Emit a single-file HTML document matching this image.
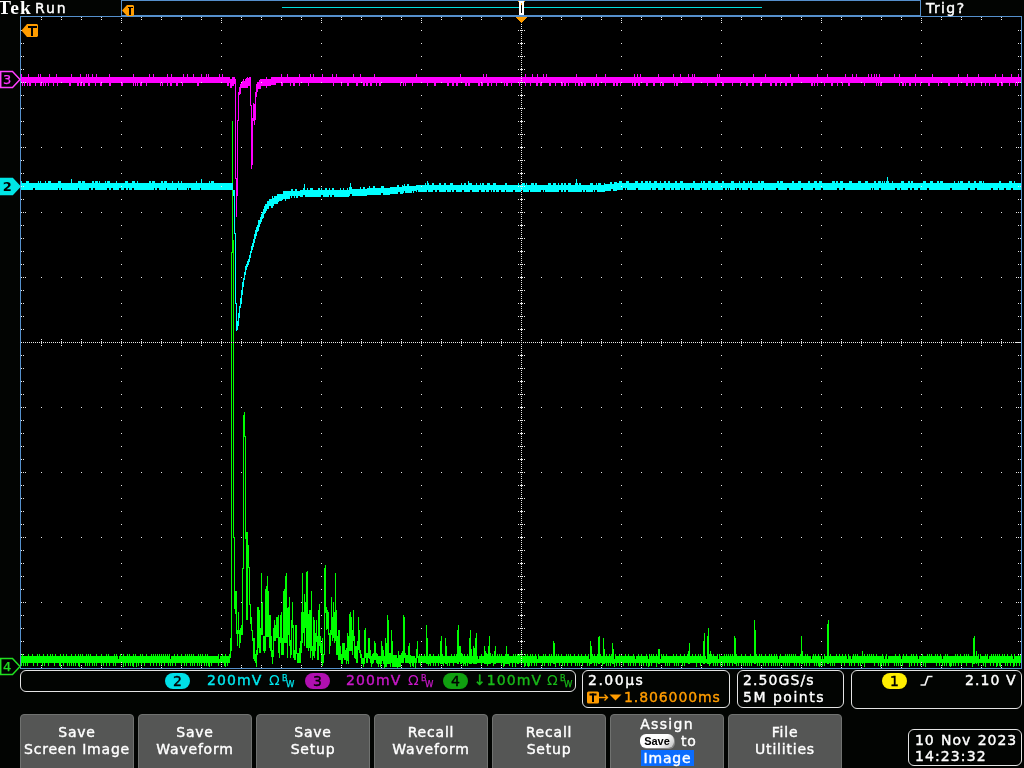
<!DOCTYPE html>
<html lang="en">
<head>
<meta charset="utf-8">
<title>Tek Run</title>
<style>
html,body{margin:0;padding:0;background:#020402;}
body{will-change:transform;width:1024px;height:768px;position:relative;overflow:hidden;color:#ffffff;
 font-family:"DejaVu Sans","Liberation Sans",sans-serif;font-size:14px;letter-spacing:1.1px;-webkit-text-stroke:0.4px currentColor;}
.abs{position:absolute;white-space:pre;line-height:16px;}
.tek{-webkit-text-stroke:0;left:-2px;top:-3px;font-family:"Liberation Serif","DejaVu Serif",serif;font-weight:bold;font-size:19.5px;letter-spacing:1.1px;line-height:22px;color:#fff;}
.box{position:absolute;border:1px solid #e4e4e4;border-radius:6px;box-sizing:border-box;background:#020402;}
.btn{position:absolute;top:714px;width:114px;height:60px;background:#555655;border:1px solid #707270;border-radius:4px;box-sizing:border-box;text-align:center;}
.btn span{letter-spacing:0.8px;position:absolute;left:0;right:0;text-align:center;white-space:pre;line-height:16px;}
.pill{position:absolute;top:673px;width:25px;height:16px;border-radius:8px;color:#000;text-align:center;line-height:16px;font-size:14px;letter-spacing:0;}
.c2{color:#00e6ee}.c3{color:#c818c8}.c4{color:#18b818}.or{color:#ff9c00}
.sm{-webkit-text-stroke:0.25px currentColor;font-size:8px;letter-spacing:0;position:absolute;line-height:8px;}
</style>
</head>
<body>
<svg width="1024" height="768" viewBox="0 0 1024 768" shape-rendering="crispEdges" style="position:absolute;left:0;top:0"><rect x="21" y="17" width="1000" height="651" fill="#000"/>
<path d="M21.5 656V666M22.5 654V663M23.5 656V666M24.5 656V663M25.5 656V666M26.5 656V663M27.5 656V666M28.5 654V663M29.5 656V663M30.5 656V663M31.5 656V663M32.5 654V663M33.5 656V666M34.5 656V663M35.5 656V663M36.5 656V663M37.5 654V666M38.5 656V663M39.5 654V663M40.5 656V663M41.5 656V663M42.5 656V666M43.5 654V663M44.5 656V666M45.5 656V663M46.5 656V663M47.5 654V663M48.5 656V666M49.5 656V663M50.5 654V663M51.5 656V663M52.5 654V663M53.5 656V663M54.5 656V666M55.5 654V663M56.5 656V663M57.5 656V663M58.5 656V663M59.5 656V666M60.5 654V667M61.5 656V663M62.5 656V663M63.5 654V666M64.5 656V663M65.5 656V663M66.5 654V663M67.5 656V666M68.5 656V663M69.5 656V666M70.5 656V663M71.5 654V666M72.5 656V663M73.5 656V666M74.5 656V663M75.5 654V666M76.5 656V663M77.5 656V663M78.5 654V666M79.5 656V667M80.5 654V663M81.5 656V663M82.5 654V663M83.5 656V663M84.5 656V663M85.5 656V666M86.5 654V663M87.5 656V666M88.5 654V663M89.5 656V666M90.5 654V663M91.5 656V663M92.5 656V666M93.5 656V663M94.5 656V666M95.5 656V663M96.5 654V666M97.5 656V663M98.5 656V663M99.5 656V663M100.5 656V663M101.5 654V666M102.5 656V663M103.5 656V666M104.5 656V663M105.5 656V663M106.5 654V666M107.5 656V663M108.5 654V663M109.5 656V666M110.5 656V663M111.5 656V663M112.5 656V663M113.5 656V666M114.5 654V663M115.5 656V666M116.5 654V663M117.5 656V663M118.5 659V663M119.5 656V663M120.5 654V663M121.5 656V663M122.5 656V663M123.5 654V667M124.5 656V663M125.5 656V666M126.5 656V663M127.5 654V663M128.5 656V666M129.5 654V663M130.5 656V666M131.5 656V663M132.5 656V666M133.5 654V667M134.5 656V663M135.5 654V663M136.5 656V667M137.5 656V663M138.5 656V666M139.5 656V663M140.5 654V663M141.5 656V666M142.5 654V663M143.5 656V663M144.5 656V666M145.5 656V663M146.5 654V663M147.5 656V663M148.5 656V663M149.5 656V663M150.5 656V666M151.5 654V663M152.5 656V663M153.5 654V666M154.5 656V663M155.5 654V663M156.5 656V666M157.5 654V663M158.5 656V663M159.5 654V666M160.5 656V663M161.5 654V666M162.5 656V663M163.5 654V663M164.5 656V666M165.5 654V663M166.5 656V663M167.5 654V663M168.5 656V666M169.5 654V663M170.5 659V666M171.5 656V663M172.5 656V666M173.5 656V663M174.5 654V663M175.5 656V666M176.5 656V663M177.5 654V663M178.5 656V663M179.5 656V663M180.5 656V663M181.5 654V666M182.5 656V663M183.5 656V663M184.5 656V666M185.5 654V663M186.5 656V666M187.5 654V663M188.5 656V663M189.5 654V663M190.5 656V666M191.5 654V663M192.5 656V666M193.5 654V663M194.5 656V666M195.5 656V663M196.5 656V663M197.5 656V666M198.5 654V663M199.5 656V666M200.5 654V663M201.5 656V666M202.5 654V663M203.5 656V663M204.5 656V666M205.5 654V663M206.5 656V666M207.5 654V663M208.5 656V666M209.5 656V667M210.5 656V663M211.5 656V666M212.5 656V663M213.5 656V663M214.5 656V663M215.5 656V663M216.5 656V663M217.5 656V663M218.5 654V666M219.5 659V663M220.5 656V663M221.5 656V663M222.5 654V663M223.5 656V663M224.5 656V666M225.5 654V667M226.5 656V663M227.5 656V666M228.5 656V663M229.5 654V663M230.5 638V658M231.5 252V651M232.5 121V253M233.5 240V538M234.5 537V609M235.5 591V614M236.5 591V634M237.5 630V646M238.5 612V634M239.5 630V648M240.5 628V643M241.5 625V635M242.5 568V635M243.5 415V569M244.5 412V437M245.5 436V539M246.5 532V620M247.5 532V620M248.5 545V568M249.5 567V605M250.5 604V624M251.5 617V631M252.5 630V641M253.5 638V659M254.5 638V661M255.5 654V663M256.5 650V667M257.5 607V655M258.5 607V648M259.5 610V653M260.5 628V653M261.5 573V635M262.5 602V635M263.5 636V651M264.5 636V653M265.5 589V651M266.5 586V637M267.5 576V637M268.5 591V637M269.5 615V648M270.5 615V651M271.5 636V657M272.5 650V664M273.5 628V657M274.5 620V641M275.5 625V641M276.5 617V638M277.5 617V638M278.5 615V653M279.5 637V658M280.5 615V643M281.5 612V655M282.5 638V655M283.5 591V655M284.5 589V643M285.5 576V643M286.5 573V643M287.5 608V658M288.5 607V635M289.5 597V646M290.5 640V658M291.5 620V655M292.5 602V628M293.5 625V658M294.5 650V660M295.5 625V660M296.5 625V654M297.5 653V663M298.5 653V663M299.5 648V663M300.5 641V663M301.5 612V653M302.5 573V643M303.5 612V633M304.5 594V646M305.5 602V628M306.5 572V648M307.5 571V648M308.5 614V651M309.5 610V648M310.5 610V658M311.5 591V651M312.5 646V660M313.5 617V656M314.5 620V658M315.5 633V651M316.5 620V642M317.5 636V660M318.5 610V660M319.5 604V646M320.5 636V653M321.5 643V663M322.5 638V666M323.5 654V663M324.5 568V655M325.5 565V613M326.5 607V630M327.5 610V629M328.5 612V635M329.5 633V654M330.5 630V646M331.5 597V635M332.5 617V641M333.5 602V638M334.5 612V643M335.5 573V641M336.5 610V655M337.5 636V655M338.5 630V660M339.5 630V660M340.5 646V660M341.5 654V664M342.5 643V664M343.5 643V658M344.5 643V660M345.5 650V660M346.5 648V664M347.5 633V661M348.5 636V664M349.5 614V651M350.5 612V651M351.5 617V651M352.5 630V655M353.5 610V641M354.5 636V658M355.5 646V659M356.5 646V663M357.5 641V663M358.5 617V650M359.5 630V653M360.5 650V658M361.5 654V664M362.5 658V664M363.5 658V667M364.5 630V664M365.5 628V658M366.5 653V663M367.5 653V663M368.5 638V658M369.5 638V659M370.5 650V663M371.5 656V667M372.5 654V664M373.5 653V663M374.5 641V660M375.5 643V660M376.5 653V663M377.5 654V664M378.5 656V667M379.5 656V664M380.5 656V667M381.5 641V664M382.5 646V661M383.5 650V664M384.5 656V668M385.5 638V667M386.5 643V667M387.5 615V664M388.5 620V664M389.5 653V664M390.5 653V667M391.5 630V663M392.5 641V667M393.5 655V667M394.5 655V667M395.5 655V667M396.5 655V667M397.5 658V668M398.5 651V667M399.5 655V667M400.5 655V667M401.5 653V663M402.5 651V663M403.5 615V663M404.5 617V658M405.5 653V663M406.5 655V663M407.5 655V663M408.5 646V663M409.5 643V664M410.5 655V667M411.5 656V663M412.5 656V666M413.5 656V667M414.5 656V663M415.5 658V668M416.5 649V663M417.5 641V658M418.5 656V663M419.5 654V663M420.5 656V666M421.5 654V663M422.5 656V663M423.5 656V663M424.5 654V663M425.5 656V663M426.5 625V664M427.5 638V664M428.5 656V666M429.5 654V664M430.5 654V666M431.5 656V663M432.5 656V663M433.5 654V666M434.5 656V663M435.5 656V666M436.5 656V663M437.5 656V663M438.5 654V666M439.5 656V663M440.5 641V664M441.5 636V664M442.5 654V664M443.5 656V666M444.5 656V663M445.5 638V664M446.5 646V664M447.5 656V666M448.5 656V663M449.5 656V666M450.5 656V663M451.5 654V663M452.5 656V663M453.5 656V666M454.5 654V663M455.5 656V663M456.5 654V663M457.5 630V664M458.5 625V664M459.5 646V662M460.5 646V664M461.5 653V664M462.5 654V663M463.5 656V666M464.5 654V664M465.5 656V666M466.5 656V663M467.5 654V666M468.5 656V663M469.5 638V664M470.5 630V664M471.5 649V664M472.5 656V663M473.5 646V664M474.5 648V664M475.5 638V664M476.5 633V664M477.5 656V663M478.5 659V663M479.5 656V663M480.5 656V663M481.5 654V666M482.5 656V663M483.5 656V663M484.5 646V664M485.5 651V664M486.5 653V664M487.5 654V666M488.5 646V664M489.5 636V664M490.5 653V664M491.5 656V663M492.5 654V663M493.5 656V666M494.5 651V664M495.5 646V664M496.5 656V663M497.5 654V663M498.5 656V663M499.5 654V663M500.5 656V663M501.5 654V666M502.5 656V663M503.5 656V667M504.5 656V666M505.5 654V664M506.5 646V664M507.5 654V664M508.5 654V664M509.5 656V666M510.5 656V663M511.5 656V663M512.5 656V667M513.5 654V663M514.5 656V663M515.5 654V667M516.5 656V663M517.5 654V664M518.5 654V664M519.5 654V663M520.5 656V663M521.5 651V665M522.5 656V663M523.5 656V663M524.5 656V667M525.5 654V666M526.5 656V663M527.5 654V666M528.5 656V667M529.5 656V666M530.5 654V663M531.5 656V666M532.5 654V663M533.5 656V663M534.5 656V666M535.5 654V663M536.5 656V666M537.5 659V663M538.5 654V663M539.5 656V663M540.5 656V663M541.5 656V663M542.5 656V666M543.5 654V663M544.5 656V666M545.5 654V663M546.5 656V663M547.5 656V663M548.5 656V666M549.5 654V663M550.5 656V666M551.5 654V663M552.5 656V663M553.5 641V664M554.5 643V664M555.5 656V667M556.5 654V663M557.5 656V663M558.5 654V663M559.5 656V666M560.5 656V663M561.5 654V663M562.5 656V666M563.5 656V663M564.5 656V666M565.5 656V663M566.5 654V663M567.5 656V666M568.5 654V663M569.5 656V663M570.5 654V663M571.5 656V666M572.5 656V663M573.5 656V663M574.5 654V663M575.5 656V666M576.5 656V663M577.5 656V666M578.5 654V663M579.5 656V666M580.5 656V663M581.5 654V663M582.5 656V666M583.5 656V663M584.5 656V663M585.5 654V663M586.5 656V663M587.5 656V666M588.5 654V663M589.5 659V666M590.5 641V664M591.5 646V664M592.5 654V663M593.5 656V663M594.5 654V666M595.5 656V663M596.5 656V666M597.5 654V663M598.5 637V664M599.5 636V664M600.5 654V663M601.5 656V663M602.5 656V666M603.5 638V664M604.5 649V664M605.5 656V663M606.5 654V666M607.5 656V663M608.5 656V666M609.5 654V663M610.5 656V666M611.5 654V663M612.5 643V664M613.5 649V664M614.5 659V667M615.5 654V663M616.5 656V666M617.5 656V663M618.5 656V663M619.5 654V666M620.5 656V663M621.5 654V663M622.5 656V663M623.5 656V666M624.5 656V663M625.5 654V663M626.5 656V663M627.5 656V663M628.5 654V666M629.5 656V663M630.5 656V666M631.5 656V663M632.5 656V663M633.5 654V666M634.5 656V663M635.5 659V666M636.5 656V663M637.5 656V663M638.5 654V663M639.5 656V666M640.5 656V663M641.5 654V666M642.5 656V663M643.5 656V666M644.5 656V663M645.5 656V663M646.5 654V666M647.5 656V663M648.5 659V667M649.5 654V666M650.5 656V663M651.5 654V666M652.5 656V663M653.5 654V663M654.5 656V663M655.5 656V663M656.5 654V667M657.5 656V663M658.5 649V664M659.5 649V664M660.5 659V663M661.5 654V663M662.5 656V663M663.5 654V663M664.5 656V663M665.5 656V666M666.5 654V663M667.5 656V666M668.5 656V663M669.5 656V666M670.5 656V663M671.5 656V663M672.5 656V663M673.5 654V663M674.5 656V666M675.5 656V663M676.5 654V666M677.5 656V663M678.5 656V666M679.5 656V663M680.5 654V663M681.5 656V663M682.5 656V666M683.5 656V663M684.5 654V666M685.5 656V663M686.5 656V663M687.5 654V663M688.5 651V664M689.5 643V664M690.5 656V663M691.5 656V663M692.5 654V663M693.5 656V663M694.5 656V663M695.5 654V663M696.5 656V667M697.5 656V663M698.5 654V663M699.5 656V663M700.5 654V666M701.5 656V663M702.5 656V663M703.5 641V664M704.5 633V664M705.5 656V663M706.5 659V663M707.5 636V664M708.5 628V664M709.5 654V666M710.5 651V664M711.5 654V663M712.5 656V663M713.5 654V666M714.5 656V663M715.5 656V666M716.5 656V663M717.5 654V666M718.5 659V663M719.5 654V663M720.5 656V666M721.5 656V663M722.5 656V666M723.5 656V663M724.5 654V666M725.5 656V663M726.5 654V663M727.5 656V666M728.5 654V663M729.5 656V666M730.5 654V663M731.5 656V663M732.5 654V666M733.5 656V663M734.5 636V664M735.5 638V664M736.5 654V666M737.5 656V663M738.5 656V666M739.5 656V663M740.5 656V663M741.5 654V666M742.5 656V663M743.5 656V666M744.5 656V663M745.5 654V666M746.5 656V663M747.5 656V666M748.5 656V663M749.5 656V666M750.5 654V663M751.5 656V666M752.5 656V663M753.5 656V663M754.5 620V664M755.5 630V664M756.5 654V663M757.5 656V666M758.5 656V663M759.5 654V666M760.5 656V663M761.5 654V663M762.5 656V663M763.5 656V666M764.5 656V663M765.5 654V666M766.5 656V663M767.5 656V663M768.5 656V666M769.5 654V663M770.5 656V663M771.5 654V666M772.5 656V663M773.5 656V666M774.5 654V663M775.5 656V666M776.5 654V663M777.5 656V666M778.5 659V663M779.5 656V666M780.5 654V663M781.5 656V663M782.5 656V663M783.5 656V666M784.5 656V663M785.5 654V666M786.5 656V663M787.5 654V666M788.5 656V663M789.5 654V666M790.5 656V663M791.5 654V663M792.5 656V663M793.5 654V663M794.5 656V666M795.5 654V663M796.5 656V666M797.5 656V663M798.5 656V663M799.5 656V666M800.5 654V663M801.5 636V664M802.5 651V664M803.5 656V663M804.5 656V666M805.5 654V663M806.5 656V666M807.5 654V663M808.5 656V663M809.5 656V666M810.5 656V663M811.5 659V663M812.5 656V663M813.5 654V663M814.5 656V666M815.5 654V663M816.5 656V666M817.5 656V663M818.5 654V666M819.5 656V667M820.5 656V666M821.5 659V663M822.5 656V666M823.5 659V663M824.5 654V666M825.5 656V663M826.5 656V663M827.5 624V664M828.5 620V664M829.5 656V663M830.5 654V666M831.5 656V663M832.5 656V666M833.5 656V663M834.5 656V666M835.5 656V663M836.5 654V663M837.5 656V663M838.5 656V663M839.5 654V663M840.5 656V663M841.5 656V666M842.5 654V663M843.5 656V663M844.5 656V666M845.5 654V663M846.5 656V663M847.5 659V663M848.5 654V663M849.5 656V666M850.5 656V663M851.5 659V666M852.5 656V663M853.5 654V663M854.5 656V666M855.5 654V663M856.5 656V663M857.5 654V663M858.5 656V666M859.5 656V663M860.5 656V666M861.5 656V663M862.5 651V664M863.5 656V663M864.5 654V667M865.5 656V663M866.5 656V663M867.5 654V663M868.5 656V663M869.5 654V663M870.5 656V663M871.5 654V663M872.5 656V663M873.5 654V663M874.5 656V666M875.5 656V663M876.5 654V663M877.5 656V663M878.5 656V666M879.5 656V663M880.5 656V667M881.5 656V666M882.5 654V663M883.5 656V666M884.5 659V663M885.5 656V666M886.5 654V663M887.5 659V663M888.5 656V666M889.5 656V663M890.5 656V663M891.5 656V663M892.5 656V663M893.5 656V663M894.5 656V666M895.5 654V663M896.5 656V666M897.5 656V663M898.5 656V666M899.5 654V663M900.5 656V666M901.5 659V663M902.5 656V666M903.5 654V663M904.5 656V663M905.5 656V663M906.5 654V663M907.5 656V663M908.5 656V663M909.5 656V667M910.5 656V663M911.5 654V666M912.5 656V663M913.5 654V663M914.5 656V666M915.5 656V663M916.5 654V663M917.5 656V666M918.5 659V663M919.5 656V663M920.5 656V666M921.5 656V663M922.5 654V663M923.5 656V666M924.5 656V663M925.5 656V667M926.5 656V663M927.5 654V663M928.5 656V663M929.5 654V663M930.5 656V663M931.5 654V663M932.5 656V663M933.5 656V663M934.5 656V663M935.5 654V663M936.5 656V666M937.5 654V663M938.5 656V663M939.5 656V666M940.5 654V663M941.5 656V663M942.5 659V666M943.5 656V663M944.5 656V666M945.5 654V663M946.5 656V666M947.5 654V663M948.5 656V663M949.5 656V666M950.5 656V667M951.5 656V666M952.5 656V663M953.5 656V666M954.5 656V663M955.5 654V666M956.5 656V663M957.5 654V663M958.5 656V666M959.5 656V663M960.5 654V663M961.5 656V666M962.5 656V663M963.5 656V663M964.5 654V663M965.5 656V663M966.5 654V666M967.5 656V663M968.5 654V663M969.5 656V663M970.5 656V663M971.5 656V663M972.5 656V667M973.5 638V664M974.5 636V664M975.5 656V663M976.5 651V664M977.5 656V663M978.5 654V666M979.5 659V663M980.5 654V663M981.5 656V663M982.5 656V663M983.5 656V666M984.5 656V663M985.5 654V667M986.5 656V663M987.5 654V663M988.5 659V663M989.5 656V663M990.5 656V666M991.5 654V663M992.5 656V663M993.5 654V666M994.5 656V663M995.5 654V663M996.5 656V667M997.5 654V666M998.5 656V663M999.5 654V666M1000.5 656V667M1001.5 656V663M1002.5 654V663M1003.5 656V663M1004.5 654V663M1005.5 656V666M1006.5 656V663M1007.5 654V666M1008.5 656V663M1009.5 656V663M1010.5 656V666M1011.5 654V663M1012.5 656V663M1013.5 659V667M1014.5 654V666M1015.5 656V663M1016.5 656V666M1017.5 656V663M1018.5 654V663M1019.5 656V666M1020.5 654V663" stroke="#00ff00" stroke-width="1" fill="none"/>
<path d="M21.5 74V83M22.5 77V86M23.5 77V83M24.5 77V86M25.5 77V83M26.5 77V83M27.5 77V86M28.5 74V83M29.5 77V86M30.5 77V86M31.5 77V83M32.5 77V83M33.5 77V83M34.5 77V83M35.5 77V86M36.5 77V83M37.5 77V83M38.5 74V83M39.5 77V83M40.5 74V86M41.5 77V86M42.5 77V83M43.5 77V86M44.5 77V83M45.5 77V86M46.5 77V83M47.5 77V83M48.5 77V86M49.5 74V83M50.5 77V83M51.5 77V83M52.5 77V83M53.5 77V86M54.5 77V83M55.5 77V83M56.5 74V83M57.5 77V86M58.5 77V83M59.5 77V83M60.5 77V83M61.5 77V83M62.5 77V83M63.5 77V83M64.5 77V83M65.5 77V83M66.5 77V83M67.5 77V83M68.5 77V83M69.5 77V86M70.5 77V86M71.5 74V83M72.5 77V83M73.5 77V83M74.5 77V83M75.5 77V83M76.5 77V83M77.5 77V86M78.5 77V86M79.5 77V83M80.5 74V86M81.5 77V86M82.5 77V83M83.5 77V86M84.5 77V86M85.5 77V83M86.5 74V83M87.5 77V83M88.5 74V86M89.5 77V86M90.5 77V83M91.5 77V83M92.5 74V83M93.5 77V83M94.5 77V83M95.5 77V86M96.5 74V83M97.5 77V83M98.5 77V83M99.5 77V83M100.5 77V86M101.5 77V86M102.5 77V83M103.5 77V83M104.5 77V83M105.5 77V83M106.5 77V83M107.5 77V83M108.5 77V83M109.5 74V86M110.5 77V86M111.5 77V83M112.5 77V83M113.5 77V83M114.5 77V83M115.5 77V83M116.5 77V83M117.5 77V83M118.5 77V83M119.5 77V83M120.5 77V83M121.5 77V86M122.5 77V86M123.5 77V83M124.5 77V83M125.5 77V83M126.5 77V83M127.5 77V83M128.5 77V83M129.5 77V83M130.5 77V83M131.5 77V83M132.5 77V83M133.5 74V86M134.5 77V83M135.5 77V86M136.5 77V83M137.5 77V86M138.5 77V83M139.5 77V83M140.5 77V86M141.5 77V86M142.5 77V83M143.5 77V83M144.5 77V83M145.5 77V83M146.5 77V86M147.5 77V83M148.5 77V83M149.5 74V83M150.5 77V83M151.5 77V83M152.5 77V83M153.5 74V83M154.5 77V83M155.5 77V83M156.5 77V83M157.5 77V83M158.5 77V83M159.5 77V83M160.5 77V86M161.5 77V83M162.5 77V86M163.5 77V83M164.5 77V83M165.5 77V83M166.5 77V83M167.5 74V86M168.5 77V83M169.5 77V83M170.5 77V86M171.5 74V86M172.5 77V83M173.5 77V83M174.5 77V83M175.5 77V83M176.5 77V86M177.5 77V86M178.5 77V83M179.5 77V83M180.5 77V83M181.5 77V83M182.5 77V86M183.5 74V83M184.5 77V83M185.5 77V83M186.5 77V83M187.5 74V83M188.5 77V83M189.5 77V83M190.5 77V83M191.5 77V83M192.5 77V83M193.5 74V83M194.5 77V83M195.5 77V83M196.5 77V83M197.5 77V86M198.5 77V86M199.5 77V83M200.5 77V83M201.5 74V83M202.5 77V83M203.5 77V83M204.5 77V83M205.5 77V83M206.5 74V83M207.5 77V83M208.5 74V83M209.5 77V83M210.5 77V83M211.5 77V83M212.5 77V83M213.5 77V83M214.5 77V83M215.5 77V83M216.5 77V83M217.5 77V83M218.5 77V83M219.5 74V83M220.5 77V83M221.5 77V83M222.5 74V83M223.5 77V83M224.5 77V83M225.5 77V83M226.5 77V83M227.5 77V86M228.5 77V86M229.5 77V83M230.5 79V88M231.5 79V88M232.5 77V86M233.5 77V86M234.5 77V84M235.5 79V179M236.5 178V217M237.5 120V196M238.5 92V121M239.5 87V95M240.5 84V94M241.5 82V88M242.5 81V88M243.5 79V88M244.5 81V88M245.5 79V88M246.5 78V88M247.5 77V88M248.5 78V86M249.5 77V86M250.5 77V106M251.5 105V169M252.5 118V165M253.5 103V121M254.5 104V125M255.5 92V120M256.5 84V97M257.5 82V92M258.5 82V89M259.5 80V89M260.5 79V89M261.5 79V86M262.5 79V86M263.5 79V86M264.5 79V86M265.5 79V86M266.5 77V88M267.5 79V86M268.5 79V86M269.5 79V86M270.5 79V86M271.5 77V85M272.5 77V85M273.5 77V85M274.5 77V85M275.5 77V85M276.5 77V83M277.5 77V83M278.5 77V83M279.5 77V83M280.5 77V83M281.5 74V86M282.5 77V86M283.5 77V83M284.5 77V83M285.5 77V83M286.5 77V83M287.5 74V83M288.5 77V83M289.5 77V83M290.5 77V86M291.5 77V83M292.5 77V83M293.5 77V86M294.5 77V86M295.5 77V83M296.5 77V83M297.5 77V83M298.5 77V83M299.5 74V86M300.5 77V83M301.5 77V83M302.5 77V83M303.5 77V83M304.5 77V83M305.5 77V83M306.5 77V83M307.5 77V83M308.5 77V86M309.5 77V83M310.5 74V83M311.5 77V83M312.5 77V83M313.5 74V83M314.5 77V83M315.5 77V83M316.5 77V83M317.5 77V83M318.5 77V83M319.5 77V83M320.5 77V83M321.5 77V83M322.5 74V83M323.5 77V83M324.5 77V83M325.5 77V83M326.5 77V83M327.5 77V83M328.5 77V83M329.5 77V83M330.5 77V83M331.5 77V83M332.5 74V83M333.5 77V86M334.5 77V83M335.5 77V83M336.5 74V83M337.5 77V83M338.5 77V83M339.5 77V83M340.5 77V83M341.5 77V86M342.5 77V83M343.5 77V83M344.5 77V83M345.5 77V83M346.5 77V83M347.5 77V86M348.5 77V86M349.5 77V83M350.5 77V83M351.5 77V83M352.5 77V83M353.5 74V83M354.5 77V83M355.5 77V83M356.5 77V86M357.5 77V86M358.5 77V83M359.5 77V83M360.5 74V83M361.5 77V83M362.5 77V83M363.5 77V86M364.5 77V86M365.5 77V83M366.5 77V86M367.5 77V86M368.5 77V83M369.5 77V83M370.5 77V86M371.5 77V86M372.5 77V83M373.5 77V83M374.5 74V83M375.5 77V83M376.5 77V86M377.5 77V83M378.5 77V83M379.5 77V86M380.5 77V86M381.5 77V83M382.5 77V83M383.5 77V83M384.5 77V83M385.5 77V83M386.5 77V83M387.5 77V83M388.5 77V83M389.5 77V83M390.5 77V83M391.5 77V83M392.5 77V83M393.5 77V83M394.5 77V83M395.5 77V83M396.5 77V83M397.5 77V83M398.5 77V83M399.5 77V83M400.5 77V86M401.5 77V83M402.5 77V83M403.5 77V86M404.5 77V83M405.5 77V86M406.5 77V83M407.5 77V83M408.5 77V83M409.5 77V83M410.5 77V83M411.5 77V83M412.5 77V86M413.5 77V83M414.5 77V83M415.5 77V83M416.5 74V83M417.5 77V83M418.5 77V83M419.5 77V83M420.5 77V83M421.5 77V83M422.5 77V83M423.5 77V83M424.5 77V83M425.5 77V83M426.5 77V83M427.5 77V86M428.5 77V83M429.5 77V83M430.5 77V83M431.5 77V83M432.5 77V83M433.5 77V83M434.5 77V86M435.5 77V86M436.5 77V83M437.5 77V83M438.5 77V83M439.5 77V83M440.5 77V83M441.5 77V83M442.5 77V83M443.5 77V83M444.5 77V83M445.5 77V83M446.5 77V83M447.5 77V86M448.5 77V86M449.5 77V83M450.5 77V83M451.5 77V83M452.5 77V86M453.5 77V86M454.5 77V83M455.5 77V83M456.5 77V86M457.5 77V86M458.5 77V83M459.5 77V83M460.5 74V83M461.5 77V83M462.5 77V83M463.5 77V83M464.5 77V83M465.5 77V86M466.5 77V86M467.5 77V83M468.5 77V86M469.5 77V86M470.5 77V83M471.5 77V83M472.5 77V83M473.5 77V83M474.5 77V83M475.5 77V83M476.5 77V83M477.5 77V83M478.5 77V86M479.5 77V86M480.5 77V83M481.5 77V86M482.5 77V86M483.5 74V83M484.5 77V83M485.5 77V83M486.5 74V83M487.5 77V86M488.5 77V86M489.5 77V83M490.5 77V83M491.5 77V86M492.5 77V83M493.5 77V83M494.5 77V83M495.5 77V83M496.5 77V86M497.5 77V83M498.5 77V83M499.5 77V83M500.5 77V83M501.5 77V83M502.5 77V83M503.5 77V83M504.5 77V86M505.5 77V83M506.5 77V86M507.5 77V86M508.5 77V83M509.5 77V83M510.5 77V83M511.5 77V86M512.5 77V83M513.5 77V83M514.5 77V83M515.5 77V83M516.5 77V83M517.5 77V83M518.5 77V83M519.5 77V86M520.5 77V83M521.5 77V83M522.5 77V83M523.5 77V83M524.5 77V83M525.5 74V86M526.5 77V83M527.5 77V83M528.5 77V83M529.5 77V83M530.5 77V86M531.5 77V83M532.5 74V83M533.5 77V83M534.5 77V83M535.5 77V83M536.5 77V86M537.5 74V86M538.5 77V83M539.5 77V83M540.5 77V86M541.5 77V86M542.5 77V83M543.5 74V83M544.5 77V83M545.5 77V83M546.5 74V83M547.5 77V83M548.5 77V83M549.5 77V86M550.5 77V86M551.5 77V83M552.5 77V83M553.5 77V83M554.5 77V83M555.5 77V86M556.5 77V83M557.5 77V83M558.5 77V83M559.5 77V83M560.5 77V83M561.5 77V86M562.5 77V86M563.5 77V83M564.5 77V86M565.5 77V86M566.5 77V83M567.5 77V83M568.5 77V86M569.5 77V83M570.5 77V83M571.5 77V83M572.5 77V83M573.5 77V83M574.5 77V83M575.5 77V86M576.5 74V83M577.5 77V83M578.5 77V86M579.5 77V86M580.5 77V83M581.5 77V86M582.5 77V86M583.5 77V83M584.5 77V86M585.5 77V86M586.5 77V83M587.5 77V83M588.5 77V83M589.5 77V83M590.5 77V83M591.5 77V86M592.5 77V83M593.5 77V86M594.5 77V86M595.5 77V83M596.5 74V83M597.5 77V86M598.5 77V86M599.5 77V83M600.5 77V83M601.5 77V83M602.5 77V83M603.5 77V83M604.5 77V83M605.5 74V86M606.5 77V83M607.5 77V83M608.5 77V83M609.5 77V83M610.5 77V83M611.5 77V83M612.5 77V83M613.5 77V86M614.5 77V86M615.5 77V83M616.5 77V86M617.5 77V86M618.5 77V83M619.5 77V83M620.5 77V86M621.5 77V83M622.5 77V83M623.5 77V83M624.5 77V83M625.5 77V83M626.5 77V83M627.5 77V83M628.5 77V83M629.5 77V83M630.5 77V83M631.5 77V83M632.5 77V86M633.5 77V83M634.5 74V86M635.5 77V86M636.5 77V83M637.5 74V83M638.5 77V86M639.5 77V86M640.5 74V83M641.5 77V83M642.5 77V83M643.5 77V83M644.5 77V83M645.5 77V83M646.5 77V86M647.5 77V86M648.5 77V83M649.5 77V83M650.5 77V83M651.5 77V83M652.5 77V83M653.5 77V86M654.5 77V86M655.5 77V83M656.5 77V83M657.5 77V83M658.5 74V83M659.5 77V83M660.5 77V86M661.5 77V83M662.5 77V86M663.5 77V86M664.5 77V83M665.5 77V83M666.5 77V83M667.5 77V83M668.5 77V83M669.5 77V83M670.5 77V83M671.5 77V83M672.5 77V83M673.5 74V83M674.5 77V86M675.5 77V83M676.5 77V86M677.5 77V86M678.5 77V83M679.5 77V83M680.5 74V83M681.5 77V83M682.5 77V83M683.5 77V83M684.5 77V83M685.5 77V83M686.5 77V83M687.5 77V83M688.5 74V83M689.5 77V83M690.5 77V83M691.5 77V83M692.5 74V86M693.5 77V86M694.5 74V83M695.5 77V83M696.5 77V83M697.5 77V83M698.5 77V83M699.5 77V83M700.5 77V83M701.5 77V83M702.5 77V83M703.5 77V83M704.5 77V83M705.5 77V83M706.5 77V83M707.5 77V86M708.5 77V83M709.5 77V83M710.5 77V83M711.5 77V83M712.5 77V83M713.5 77V83M714.5 77V83M715.5 77V86M716.5 77V86M717.5 74V83M718.5 77V83M719.5 74V83M720.5 77V83M721.5 77V83M722.5 77V86M723.5 77V86M724.5 77V83M725.5 77V83M726.5 77V83M727.5 77V83M728.5 77V83M729.5 77V83M730.5 77V83M731.5 77V83M732.5 77V86M733.5 77V83M734.5 77V83M735.5 77V83M736.5 77V83M737.5 77V83M738.5 77V83M739.5 77V83M740.5 77V86M741.5 77V83M742.5 77V83M743.5 77V83M744.5 77V83M745.5 77V83M746.5 77V86M747.5 77V86M748.5 77V83M749.5 77V83M750.5 77V83M751.5 77V83M752.5 77V86M753.5 74V86M754.5 77V83M755.5 77V83M756.5 77V83M757.5 77V83M758.5 77V83M759.5 77V83M760.5 77V86M761.5 77V86M762.5 77V83M763.5 77V83M764.5 77V83M765.5 74V83M766.5 77V83M767.5 77V83M768.5 77V83M769.5 77V83M770.5 77V86M771.5 77V86M772.5 77V83M773.5 77V83M774.5 77V83M775.5 77V86M776.5 77V86M777.5 77V83M778.5 77V83M779.5 77V83M780.5 77V86M781.5 77V83M782.5 77V83M783.5 77V83M784.5 77V83M785.5 77V86M786.5 77V86M787.5 77V83M788.5 77V83M789.5 77V83M790.5 74V83M791.5 77V86M792.5 77V86M793.5 77V83M794.5 77V83M795.5 77V83M796.5 77V83M797.5 77V83M798.5 74V83M799.5 77V83M800.5 77V83M801.5 77V83M802.5 77V83M803.5 77V83M804.5 77V83M805.5 77V83M806.5 77V83M807.5 77V83M808.5 77V83M809.5 77V83M810.5 77V83M811.5 77V86M812.5 77V86M813.5 77V83M814.5 77V86M815.5 77V83M816.5 77V83M817.5 74V86M818.5 77V83M819.5 77V83M820.5 77V83M821.5 77V83M822.5 77V83M823.5 77V83M824.5 77V86M825.5 77V83M826.5 77V83M827.5 74V83M828.5 77V83M829.5 77V83M830.5 77V83M831.5 77V86M832.5 77V86M833.5 77V83M834.5 77V83M835.5 77V83M836.5 77V83M837.5 77V86M838.5 77V83M839.5 77V83M840.5 77V83M841.5 77V83M842.5 77V86M843.5 77V83M844.5 77V83M845.5 74V83M846.5 77V83M847.5 77V83M848.5 77V86M849.5 77V86M850.5 77V83M851.5 77V83M852.5 74V83M853.5 77V83M854.5 77V83M855.5 77V83M856.5 74V83M857.5 77V83M858.5 77V83M859.5 77V83M860.5 77V83M861.5 77V83M862.5 77V83M863.5 77V83M864.5 77V86M865.5 77V83M866.5 77V83M867.5 77V83M868.5 74V83M869.5 77V83M870.5 77V83M871.5 74V83M872.5 77V83M873.5 77V83M874.5 74V83M875.5 77V83M876.5 74V86M877.5 77V83M878.5 77V86M879.5 74V83M880.5 77V86M881.5 77V86M882.5 77V83M883.5 77V83M884.5 77V83M885.5 77V83M886.5 77V83M887.5 77V83M888.5 77V83M889.5 77V83M890.5 77V83M891.5 77V83M892.5 77V83M893.5 77V83M894.5 74V83M895.5 77V83M896.5 77V83M897.5 77V83M898.5 77V83M899.5 74V86M900.5 77V83M901.5 77V83M902.5 77V86M903.5 77V86M904.5 77V83M905.5 77V86M906.5 77V83M907.5 77V83M908.5 77V83M909.5 77V86M910.5 77V86M911.5 77V83M912.5 77V83M913.5 77V83M914.5 77V83M915.5 74V86M916.5 77V83M917.5 77V83M918.5 77V83M919.5 77V83M920.5 77V86M921.5 77V83M922.5 77V83M923.5 77V83M924.5 77V83M925.5 77V83M926.5 77V83M927.5 77V83M928.5 77V86M929.5 77V86M930.5 77V83M931.5 77V83M932.5 74V83M933.5 77V83M934.5 77V83M935.5 77V83M936.5 77V83M937.5 77V83M938.5 77V86M939.5 77V83M940.5 77V83M941.5 77V83M942.5 77V83M943.5 77V83M944.5 77V83M945.5 77V83M946.5 77V83M947.5 77V83M948.5 77V86M949.5 77V86M950.5 77V83M951.5 77V83M952.5 77V83M953.5 77V83M954.5 77V83M955.5 77V83M956.5 77V83M957.5 77V86M958.5 74V83M959.5 77V83M960.5 77V83M961.5 77V83M962.5 77V83M963.5 77V83M964.5 77V83M965.5 77V83M966.5 77V86M967.5 74V86M968.5 77V83M969.5 77V83M970.5 77V83M971.5 77V86M972.5 77V83M973.5 77V83M974.5 77V86M975.5 77V83M976.5 77V83M977.5 77V83M978.5 74V83M979.5 77V83M980.5 77V83M981.5 77V86M982.5 77V83M983.5 77V83M984.5 77V83M985.5 77V86M986.5 77V83M987.5 77V83M988.5 77V83M989.5 77V86M990.5 77V83M991.5 77V83M992.5 77V83M993.5 77V83M994.5 77V83M995.5 74V83M996.5 77V83M997.5 77V86M998.5 77V86M999.5 77V83M1000.5 77V83M1001.5 77V86M1002.5 74V86M1003.5 77V83M1004.5 77V83M1005.5 77V83M1006.5 77V83M1007.5 77V83M1008.5 77V83M1009.5 77V86M1010.5 77V83M1011.5 74V83M1012.5 77V83M1013.5 77V83M1014.5 77V83M1015.5 77V86M1016.5 77V83M1017.5 77V86M1018.5 74V83M1019.5 77V83M1020.5 77V83" stroke="#ff00ff" stroke-width="1" fill="none"/>
<path d="M21.5 181V190M22.5 183V190M23.5 183V190M24.5 183V190M25.5 183V190M26.5 181V190M27.5 181V190M28.5 181V190M29.5 183V190M30.5 183V190M31.5 183V190M32.5 183V190M33.5 183V188M34.5 183V188M35.5 183V190M36.5 183V190M37.5 183V190M38.5 181V190M39.5 183V190M40.5 181V190M41.5 183V190M42.5 183V190M43.5 183V190M44.5 183V190M45.5 181V190M46.5 183V190M47.5 183V190M48.5 181V190M49.5 181V190M50.5 181V190M51.5 183V190M52.5 183V190M53.5 183V190M54.5 183V190M55.5 183V190M56.5 183V190M57.5 183V190M58.5 181V188M59.5 181V190M60.5 181V190M61.5 183V188M62.5 183V190M63.5 183V190M64.5 183V190M65.5 183V190M66.5 183V190M67.5 183V190M68.5 183V190M69.5 183V190M70.5 183V190M71.5 179V190M72.5 183V190M73.5 183V190M74.5 183V190M75.5 183V190M76.5 183V190M77.5 183V190M78.5 181V188M79.5 181V190M80.5 181V190M81.5 183V190M82.5 181V190M83.5 181V190M84.5 181V190M85.5 183V190M86.5 183V190M87.5 183V190M88.5 183V190M89.5 183V188M90.5 183V188M91.5 183V190M92.5 181V190M93.5 181V188M94.5 183V188M95.5 181V190M96.5 181V190M97.5 181V190M98.5 183V190M99.5 181V190M100.5 183V190M101.5 183V190M102.5 183V190M103.5 183V190M104.5 183V190M105.5 181V190M106.5 183V190M107.5 181V188M108.5 181V188M109.5 181V190M110.5 183V190M111.5 183V188M112.5 183V188M113.5 183V190M114.5 183V190M115.5 183V190M116.5 181V190M117.5 183V190M118.5 183V190M119.5 183V188M120.5 183V188M121.5 183V190M122.5 183V190M123.5 183V190M124.5 183V188M125.5 181V188M126.5 181V190M127.5 181V190M128.5 183V188M129.5 183V190M130.5 183V190M131.5 183V190M132.5 181V188M133.5 181V188M134.5 181V190M135.5 183V190M136.5 183V190M137.5 181V190M138.5 183V190M139.5 183V190M140.5 183V190M141.5 183V190M142.5 183V190M143.5 183V190M144.5 183V190M145.5 183V190M146.5 183V190M147.5 183V190M148.5 183V190M149.5 181V190M150.5 181V190M151.5 183V190M152.5 181V190M153.5 181V190M154.5 181V188M155.5 183V190M156.5 183V190M157.5 183V188M158.5 183V188M159.5 183V190M160.5 183V190M161.5 181V190M162.5 181V190M163.5 183V190M164.5 181V190M165.5 181V190M166.5 181V188M167.5 183V190M168.5 183V190M169.5 183V190M170.5 183V190M171.5 183V190M172.5 181V190M173.5 183V190M174.5 183V190M175.5 183V190M176.5 183V190M177.5 183V188M178.5 181V190M179.5 183V190M180.5 183V190M181.5 181V190M182.5 183V190M183.5 183V190M184.5 183V190M185.5 183V190M186.5 183V190M187.5 183V188M188.5 183V190M189.5 183V188M190.5 183V188M191.5 183V190M192.5 183V190M193.5 183V190M194.5 183V190M195.5 183V190M196.5 181V190M197.5 183V190M198.5 183V190M199.5 183V190M200.5 183V188M201.5 179V190M202.5 183V190M203.5 183V190M204.5 183V190M205.5 183V190M206.5 183V190M207.5 183V190M208.5 183V190M209.5 181V190M210.5 183V190M211.5 181V190M212.5 181V190M213.5 181V190M214.5 183V190M215.5 183V190M216.5 183V190M217.5 183V190M218.5 183V190M219.5 183V190M220.5 183V190M221.5 183V190M222.5 183V190M223.5 183V190M224.5 183V190M225.5 183V190M226.5 183V190M227.5 183V190M228.5 183V190M229.5 183V190M230.5 183V190M231.5 183V190M232.5 183V190M233.5 190V196M234.5 190V234M235.5 233V304M236.5 303V331M237.5 321V330M238.5 313V326M239.5 306V318M240.5 298V308M241.5 290V304M242.5 282V295M243.5 278V287M244.5 272V280M245.5 266V275M246.5 264V270M247.5 261V267M248.5 259V265M249.5 255V262M250.5 251V258M251.5 246V253M252.5 243V250M253.5 239V247M254.5 234V243M255.5 230V239M256.5 227V236M257.5 225V232M258.5 220V231M259.5 220V227M260.5 217V224M261.5 214V222M262.5 212V219M263.5 209V218M264.5 206V214M265.5 204V213M266.5 204V211M267.5 201V209M268.5 201V209M269.5 199V206M270.5 199V206M271.5 199V208M272.5 196V208M273.5 198V206M274.5 196V204M275.5 196V204M276.5 196V204M277.5 194V204M278.5 194V202M279.5 194V201M280.5 194V201M281.5 194V201M282.5 194V200M283.5 191V199M284.5 191V199M285.5 191V201M286.5 191V199M287.5 191V199M288.5 191V199M289.5 191V199M290.5 191V196M291.5 189V198M292.5 189V196M293.5 191V196M294.5 191V198M295.5 189V196M296.5 189V198M297.5 191V198M298.5 191V196M299.5 191V196M300.5 190V197M301.5 190V197M302.5 190V197M303.5 188V195M304.5 184V195M305.5 190V197M306.5 190V197M307.5 188V197M308.5 190V197M309.5 190V197M310.5 188V197M311.5 188V197M312.5 188V197M313.5 190V197M314.5 190V197M315.5 190V197M316.5 190V197M317.5 190V197M318.5 188V197M319.5 188V197M320.5 190V197M321.5 188V195M322.5 190V195M323.5 190V197M324.5 190V197M325.5 188V197M326.5 188V197M327.5 190V197M328.5 190V197M329.5 188V195M330.5 190V197M331.5 190V197M332.5 188V195M333.5 188V195M334.5 190V197M335.5 190V197M336.5 190V197M337.5 190V197M338.5 190V197M339.5 190V197M340.5 188V197M341.5 190V197M342.5 190V197M343.5 188V197M344.5 190V197M345.5 190V197M346.5 190V197M347.5 188V197M348.5 190V197M349.5 187V196M350.5 183V194M351.5 187V194M352.5 189V196M353.5 189V196M354.5 189V196M355.5 189V196M356.5 189V196M357.5 189V196M358.5 189V196M359.5 189V196M360.5 187V196M361.5 189V196M362.5 189V196M363.5 187V196M364.5 187V196M365.5 189V196M366.5 189V196M367.5 188V195M368.5 188V195M369.5 186V195M370.5 188V195M371.5 188V195M372.5 188V195M373.5 186V195M374.5 186V195M375.5 188V195M376.5 188V195M377.5 188V195M378.5 188V195M379.5 188V195M380.5 188V195M381.5 186V193M382.5 186V193M383.5 186V195M384.5 188V195M385.5 188V195M386.5 188V195M387.5 188V195M388.5 188V195M389.5 188V195M390.5 187V194M391.5 187V194M392.5 187V194M393.5 187V194M394.5 187V194M395.5 187V194M396.5 187V194M397.5 185V194M398.5 185V192M399.5 187V192M400.5 187V194M401.5 187V194M402.5 185V194M403.5 186V193M404.5 184V191M405.5 186V193M406.5 186V193M407.5 184V193M408.5 184V193M409.5 186V193M410.5 186V193M411.5 186V193M412.5 186V191M413.5 186V193M414.5 186V191M415.5 186V191M416.5 185V192M417.5 185V190M418.5 185V192M419.5 185V192M420.5 185V192M421.5 185V192M422.5 185V192M423.5 185V192M424.5 185V192M425.5 183V192M426.5 185V192M427.5 181V190M428.5 183V192M429.5 185V192M430.5 185V192M431.5 185V192M432.5 183V192M433.5 183V190M434.5 185V190M435.5 185V192M436.5 185V192M437.5 185V190M438.5 185V190M439.5 183V192M440.5 183V192M441.5 185V192M442.5 185V192M443.5 185V192M444.5 183V192M445.5 183V192M446.5 185V190M447.5 185V192M448.5 185V192M449.5 185V192M450.5 183V192M451.5 183V190M452.5 183V192M453.5 185V192M454.5 185V190M455.5 185V190M456.5 185V192M457.5 185V192M458.5 185V192M459.5 185V192M460.5 185V192M461.5 183V192M462.5 185V190M463.5 185V190M464.5 183V192M465.5 183V192M466.5 185V192M467.5 185V192M468.5 181V192M469.5 183V192M470.5 183V190M471.5 183V190M472.5 185V192M473.5 185V192M474.5 185V192M475.5 185V192M476.5 183V192M477.5 185V192M478.5 185V192M479.5 185V190M480.5 183V190M481.5 185V192M482.5 183V192M483.5 183V192M484.5 185V192M485.5 185V190M486.5 185V192M487.5 183V192M488.5 183V192M489.5 183V190M490.5 185V190M491.5 185V192M492.5 185V190M493.5 183V192M494.5 183V192M495.5 183V190M496.5 185V192M497.5 185V192M498.5 185V192M499.5 185V190M500.5 185V190M501.5 185V192M502.5 185V192M503.5 185V192M504.5 185V192M505.5 183V190M506.5 183V192M507.5 185V192M508.5 185V192M509.5 185V192M510.5 185V192M511.5 185V192M512.5 185V192M513.5 185V190M514.5 185V190M515.5 185V192M516.5 185V192M517.5 185V192M518.5 183V192M519.5 185V192M520.5 185V192M521.5 185V190M522.5 183V190M523.5 183V192M524.5 183V192M525.5 185V192M526.5 183V192M527.5 185V192M528.5 185V192M529.5 185V190M530.5 185V192M531.5 183V192M532.5 183V192M533.5 183V192M534.5 185V192M535.5 183V192M536.5 183V192M537.5 185V192M538.5 185V192M539.5 185V192M540.5 185V192M541.5 185V190M542.5 185V190M543.5 185V192M544.5 185V190M545.5 185V192M546.5 185V192M547.5 185V192M548.5 183V192M549.5 183V192M550.5 183V192M551.5 185V192M552.5 185V192M553.5 183V192M554.5 183V192M555.5 183V192M556.5 185V192M557.5 185V192M558.5 183V192M559.5 185V190M560.5 185V190M561.5 183V192M562.5 183V192M563.5 185V190M564.5 183V192M565.5 183V192M566.5 185V190M567.5 185V190M568.5 183V192M569.5 183V192M570.5 183V192M571.5 185V192M572.5 185V192M573.5 185V192M574.5 185V192M575.5 183V192M576.5 179V192M577.5 183V192M578.5 185V192M579.5 183V192M580.5 183V192M581.5 185V192M582.5 185V190M583.5 185V192M584.5 185V192M585.5 185V190M586.5 185V192M587.5 185V192M588.5 185V192M589.5 185V192M590.5 183V192M591.5 183V192M592.5 183V192M593.5 185V190M594.5 185V192M595.5 185V190M596.5 183V190M597.5 185V192M598.5 183V192M599.5 183V192M600.5 183V192M601.5 185V192M602.5 185V192M603.5 185V192M604.5 183V192M605.5 184V191M606.5 184V191M607.5 184V191M608.5 184V191M609.5 184V191M610.5 182V191M611.5 182V189M612.5 184V189M613.5 184V191M614.5 182V191M615.5 182V191M616.5 182V191M617.5 183V190M618.5 183V190M619.5 181V190M620.5 181V190M621.5 181V190M622.5 183V190M623.5 183V188M624.5 183V188M625.5 183V190M626.5 181V188M627.5 181V190M628.5 181V190M629.5 183V190M630.5 183V190M631.5 183V190M632.5 183V190M633.5 183V190M634.5 183V190M635.5 181V190M636.5 181V188M637.5 181V188M638.5 183V190M639.5 183V190M640.5 183V190M641.5 181V190M642.5 181V190M643.5 183V190M644.5 183V190M645.5 181V190M646.5 181V190M647.5 181V190M648.5 183V190M649.5 181V190M650.5 181V190M651.5 183V188M652.5 183V190M653.5 183V190M654.5 181V190M655.5 181V190M656.5 181V188M657.5 183V188M658.5 183V190M659.5 183V190M660.5 181V190M661.5 183V190M662.5 183V190M663.5 183V188M664.5 181V188M665.5 181V190M666.5 183V190M667.5 183V190M668.5 181V190M669.5 181V190M670.5 183V188M671.5 183V190M672.5 183V190M673.5 183V190M674.5 183V188M675.5 181V190M676.5 181V190M677.5 183V190M678.5 183V190M679.5 183V190M680.5 181V188M681.5 181V190M682.5 181V190M683.5 183V190M684.5 183V188M685.5 183V190M686.5 183V190M687.5 183V190M688.5 183V190M689.5 183V190M690.5 183V188M691.5 183V190M692.5 183V188M693.5 181V188M694.5 181V190M695.5 183V190M696.5 183V190M697.5 183V190M698.5 183V190M699.5 183V190M700.5 183V188M701.5 181V188M702.5 183V190M703.5 181V190M704.5 181V190M705.5 183V190M706.5 183V190M707.5 183V188M708.5 181V190M709.5 181V190M710.5 181V190M711.5 183V190M712.5 183V188M713.5 183V190M714.5 183V190M715.5 181V190M716.5 181V190M717.5 181V190M718.5 183V190M719.5 183V190M720.5 183V190M721.5 183V190M722.5 181V190M723.5 181V188M724.5 183V188M725.5 183V190M726.5 183V190M727.5 183V188M728.5 183V190M729.5 183V188M730.5 183V190M731.5 181V190M732.5 181V190M733.5 181V190M734.5 183V190M735.5 183V188M736.5 183V190M737.5 183V188M738.5 183V188M739.5 181V190M740.5 183V190M741.5 183V188M742.5 183V190M743.5 181V190M744.5 181V190M745.5 183V190M746.5 183V190M747.5 183V190M748.5 181V188M749.5 183V188M750.5 181V190M751.5 181V190M752.5 183V188M753.5 183V190M754.5 183V190M755.5 183V190M756.5 183V190M757.5 183V190M758.5 181V190M759.5 181V190M760.5 183V190M761.5 181V190M762.5 181V190M763.5 181V188M764.5 183V190M765.5 183V190M766.5 183V190M767.5 183V190M768.5 183V190M769.5 183V190M770.5 183V190M771.5 183V190M772.5 183V190M773.5 183V190M774.5 183V190M775.5 183V190M776.5 183V188M777.5 181V188M778.5 181V190M779.5 183V190M780.5 181V190M781.5 181V190M782.5 181V190M783.5 183V190M784.5 183V190M785.5 183V190M786.5 183V190M787.5 183V188M788.5 183V188M789.5 183V190M790.5 183V190M791.5 183V190M792.5 181V190M793.5 181V190M794.5 183V190M795.5 183V190M796.5 183V190M797.5 183V190M798.5 181V190M799.5 181V190M800.5 181V190M801.5 183V188M802.5 183V188M803.5 183V190M804.5 183V190M805.5 183V190M806.5 183V190M807.5 183V190M808.5 181V190M809.5 181V190M810.5 183V190M811.5 183V190M812.5 183V190M813.5 183V188M814.5 181V188M815.5 181V190M816.5 181V190M817.5 183V190M818.5 183V190M819.5 181V190M820.5 181V190M821.5 181V188M822.5 183V188M823.5 183V190M824.5 183V190M825.5 183V190M826.5 183V190M827.5 183V190M828.5 183V190M829.5 183V190M830.5 183V190M831.5 183V190M832.5 181V190M833.5 181V190M834.5 181V190M835.5 183V190M836.5 181V190M837.5 181V188M838.5 183V188M839.5 183V190M840.5 181V190M841.5 181V190M842.5 181V190M843.5 183V188M844.5 183V188M845.5 183V190M846.5 183V190M847.5 183V190M848.5 183V190M849.5 181V190M850.5 181V190M851.5 181V190M852.5 183V190M853.5 183V190M854.5 183V190M855.5 183V190M856.5 183V190M857.5 183V190M858.5 181V190M859.5 181V190M860.5 181V190M861.5 183V190M862.5 183V190M863.5 183V190M864.5 183V190M865.5 181V190M866.5 181V190M867.5 181V190M868.5 183V190M869.5 183V190M870.5 183V190M871.5 183V188M872.5 183V190M873.5 183V188M874.5 181V190M875.5 181V190M876.5 183V190M877.5 183V190M878.5 181V190M879.5 181V188M880.5 181V188M881.5 183V190M882.5 181V190M883.5 183V190M884.5 181V190M885.5 183V190M886.5 181V190M887.5 177V190M888.5 181V190M889.5 183V190M890.5 183V190M891.5 183V190M892.5 181V190M893.5 183V190M894.5 183V190M895.5 183V188M896.5 183V188M897.5 183V190M898.5 183V190M899.5 183V190M900.5 183V188M901.5 181V190M902.5 181V190M903.5 181V190M904.5 183V190M905.5 183V190M906.5 183V190M907.5 183V190M908.5 181V188M909.5 181V188M910.5 183V190M911.5 181V190M912.5 181V188M913.5 183V188M914.5 183V190M915.5 183V190M916.5 183V190M917.5 183V190M918.5 183V188M919.5 183V188M920.5 183V190M921.5 183V190M922.5 183V190M923.5 181V190M924.5 181V190M925.5 181V190M926.5 183V190M927.5 183V188M928.5 183V188M929.5 183V190M930.5 181V190M931.5 181V190M932.5 181V190M933.5 183V190M934.5 183V190M935.5 183V190M936.5 183V190M937.5 181V190M938.5 181V190M939.5 183V190M940.5 181V190M941.5 181V190M942.5 181V190M943.5 183V190M944.5 183V190M945.5 183V190M946.5 183V190M947.5 183V190M948.5 183V190M949.5 183V190M950.5 183V188M951.5 183V188M952.5 183V190M953.5 183V190M954.5 181V190M955.5 183V190M956.5 183V190M957.5 183V190M958.5 181V190M959.5 183V190M960.5 181V190M961.5 181V190M962.5 181V190M963.5 183V190M964.5 183V190M965.5 183V190M966.5 183V190M967.5 183V190M968.5 181V188M969.5 181V188M970.5 183V190M971.5 183V190M972.5 183V190M973.5 183V190M974.5 181V190M975.5 181V188M976.5 183V188M977.5 183V190M978.5 183V190M979.5 181V190M980.5 181V190M981.5 181V190M982.5 183V190M983.5 181V190M984.5 183V190M985.5 183V190M986.5 183V190M987.5 183V190M988.5 183V190M989.5 183V190M990.5 183V190M991.5 183V188M992.5 183V188M993.5 183V190M994.5 183V190M995.5 183V190M996.5 183V190M997.5 183V190M998.5 183V188M999.5 181V190M1000.5 181V190M1001.5 183V190M1002.5 183V190M1003.5 183V190M1004.5 183V188M1005.5 183V188M1006.5 183V190M1007.5 183V190M1008.5 183V190M1009.5 181V190M1010.5 181V190M1011.5 181V188M1012.5 183V188M1013.5 183V190M1014.5 181V190M1015.5 183V190M1016.5 183V190M1017.5 183V190M1018.5 183V190M1019.5 183V190M1020.5 183V190" stroke="#00ffff" stroke-width="1" fill="none"/>
<g fill="#e8e8e8"><line x1="121.5" y1="30" x2="121.5" y2="655" stroke="#e8e8e8" stroke-width="1" stroke-dasharray="1 12"/><line x1="221.5" y1="30" x2="221.5" y2="655" stroke="#e8e8e8" stroke-width="1" stroke-dasharray="1 12"/><line x1="321.5" y1="30" x2="321.5" y2="655" stroke="#e8e8e8" stroke-width="1" stroke-dasharray="1 12"/><line x1="421.5" y1="30" x2="421.5" y2="655" stroke="#e8e8e8" stroke-width="1" stroke-dasharray="1 12"/><line x1="621.5" y1="30" x2="621.5" y2="655" stroke="#e8e8e8" stroke-width="1" stroke-dasharray="1 12"/><line x1="721.5" y1="30" x2="721.5" y2="655" stroke="#e8e8e8" stroke-width="1" stroke-dasharray="1 12"/><line x1="821.5" y1="30" x2="821.5" y2="655" stroke="#e8e8e8" stroke-width="1" stroke-dasharray="1 12"/><line x1="921.5" y1="30" x2="921.5" y2="655" stroke="#e8e8e8" stroke-width="1" stroke-dasharray="1 12"/><line x1="21" y1="82.5" x2="1021" y2="82.5" stroke="#e8e8e8" stroke-width="1" stroke-dasharray="1 19"/><line x1="21" y1="147.5" x2="1021" y2="147.5" stroke="#e8e8e8" stroke-width="1" stroke-dasharray="1 19"/><line x1="21" y1="212.5" x2="1021" y2="212.5" stroke="#e8e8e8" stroke-width="1" stroke-dasharray="1 19"/><line x1="21" y1="277.5" x2="1021" y2="277.5" stroke="#e8e8e8" stroke-width="1" stroke-dasharray="1 19"/><line x1="21" y1="407.5" x2="1021" y2="407.5" stroke="#e8e8e8" stroke-width="1" stroke-dasharray="1 19"/><line x1="21" y1="472.5" x2="1021" y2="472.5" stroke="#e8e8e8" stroke-width="1" stroke-dasharray="1 19"/><line x1="21" y1="537.5" x2="1021" y2="537.5" stroke="#e8e8e8" stroke-width="1" stroke-dasharray="1 19"/><line x1="21" y1="602.5" x2="1021" y2="602.5" stroke="#e8e8e8" stroke-width="1" stroke-dasharray="1 19"/><line x1="521.5" y1="18" x2="521.5" y2="668" stroke="#e8e8e8" stroke-width="1" stroke-dasharray="1 1"/><line x1="21" y1="342.5" x2="1021" y2="342.5" stroke="#e8e8e8" stroke-width="1" stroke-dasharray="1 1"/><rect x="518" y="30" width="1" height="1"/><rect x="520" y="30" width="3" height="1"/><rect x="524" y="30" width="1" height="1"/><rect x="518" y="43" width="1" height="1"/><rect x="520" y="43" width="3" height="1"/><rect x="524" y="43" width="1" height="1"/><rect x="518" y="56" width="1" height="1"/><rect x="520" y="56" width="3" height="1"/><rect x="524" y="56" width="1" height="1"/><rect x="518" y="69" width="1" height="1"/><rect x="520" y="69" width="3" height="1"/><rect x="524" y="69" width="1" height="1"/><rect x="518" y="82" width="1" height="1"/><rect x="520" y="82" width="3" height="1"/><rect x="524" y="82" width="1" height="1"/><rect x="518" y="95" width="1" height="1"/><rect x="520" y="95" width="3" height="1"/><rect x="524" y="95" width="1" height="1"/><rect x="518" y="108" width="1" height="1"/><rect x="520" y="108" width="3" height="1"/><rect x="524" y="108" width="1" height="1"/><rect x="518" y="121" width="1" height="1"/><rect x="520" y="121" width="3" height="1"/><rect x="524" y="121" width="1" height="1"/><rect x="518" y="134" width="1" height="1"/><rect x="520" y="134" width="3" height="1"/><rect x="524" y="134" width="1" height="1"/><rect x="518" y="147" width="1" height="1"/><rect x="520" y="147" width="3" height="1"/><rect x="524" y="147" width="1" height="1"/><rect x="518" y="160" width="1" height="1"/><rect x="520" y="160" width="3" height="1"/><rect x="524" y="160" width="1" height="1"/><rect x="518" y="173" width="1" height="1"/><rect x="520" y="173" width="3" height="1"/><rect x="524" y="173" width="1" height="1"/><rect x="518" y="186" width="1" height="1"/><rect x="520" y="186" width="3" height="1"/><rect x="524" y="186" width="1" height="1"/><rect x="518" y="199" width="1" height="1"/><rect x="520" y="199" width="3" height="1"/><rect x="524" y="199" width="1" height="1"/><rect x="518" y="212" width="1" height="1"/><rect x="520" y="212" width="3" height="1"/><rect x="524" y="212" width="1" height="1"/><rect x="518" y="225" width="1" height="1"/><rect x="520" y="225" width="3" height="1"/><rect x="524" y="225" width="1" height="1"/><rect x="518" y="238" width="1" height="1"/><rect x="520" y="238" width="3" height="1"/><rect x="524" y="238" width="1" height="1"/><rect x="518" y="251" width="1" height="1"/><rect x="520" y="251" width="3" height="1"/><rect x="524" y="251" width="1" height="1"/><rect x="518" y="264" width="1" height="1"/><rect x="520" y="264" width="3" height="1"/><rect x="524" y="264" width="1" height="1"/><rect x="518" y="277" width="1" height="1"/><rect x="520" y="277" width="3" height="1"/><rect x="524" y="277" width="1" height="1"/><rect x="518" y="290" width="1" height="1"/><rect x="520" y="290" width="3" height="1"/><rect x="524" y="290" width="1" height="1"/><rect x="518" y="303" width="1" height="1"/><rect x="520" y="303" width="3" height="1"/><rect x="524" y="303" width="1" height="1"/><rect x="518" y="316" width="1" height="1"/><rect x="520" y="316" width="3" height="1"/><rect x="524" y="316" width="1" height="1"/><rect x="518" y="329" width="1" height="1"/><rect x="520" y="329" width="3" height="1"/><rect x="524" y="329" width="1" height="1"/><rect x="518" y="355" width="1" height="1"/><rect x="520" y="355" width="3" height="1"/><rect x="524" y="355" width="1" height="1"/><rect x="518" y="368" width="1" height="1"/><rect x="520" y="368" width="3" height="1"/><rect x="524" y="368" width="1" height="1"/><rect x="518" y="381" width="1" height="1"/><rect x="520" y="381" width="3" height="1"/><rect x="524" y="381" width="1" height="1"/><rect x="518" y="394" width="1" height="1"/><rect x="520" y="394" width="3" height="1"/><rect x="524" y="394" width="1" height="1"/><rect x="518" y="407" width="1" height="1"/><rect x="520" y="407" width="3" height="1"/><rect x="524" y="407" width="1" height="1"/><rect x="518" y="420" width="1" height="1"/><rect x="520" y="420" width="3" height="1"/><rect x="524" y="420" width="1" height="1"/><rect x="518" y="433" width="1" height="1"/><rect x="520" y="433" width="3" height="1"/><rect x="524" y="433" width="1" height="1"/><rect x="518" y="446" width="1" height="1"/><rect x="520" y="446" width="3" height="1"/><rect x="524" y="446" width="1" height="1"/><rect x="518" y="459" width="1" height="1"/><rect x="520" y="459" width="3" height="1"/><rect x="524" y="459" width="1" height="1"/><rect x="518" y="472" width="1" height="1"/><rect x="520" y="472" width="3" height="1"/><rect x="524" y="472" width="1" height="1"/><rect x="518" y="485" width="1" height="1"/><rect x="520" y="485" width="3" height="1"/><rect x="524" y="485" width="1" height="1"/><rect x="518" y="498" width="1" height="1"/><rect x="520" y="498" width="3" height="1"/><rect x="524" y="498" width="1" height="1"/><rect x="518" y="511" width="1" height="1"/><rect x="520" y="511" width="3" height="1"/><rect x="524" y="511" width="1" height="1"/><rect x="518" y="524" width="1" height="1"/><rect x="520" y="524" width="3" height="1"/><rect x="524" y="524" width="1" height="1"/><rect x="518" y="537" width="1" height="1"/><rect x="520" y="537" width="3" height="1"/><rect x="524" y="537" width="1" height="1"/><rect x="518" y="550" width="1" height="1"/><rect x="520" y="550" width="3" height="1"/><rect x="524" y="550" width="1" height="1"/><rect x="518" y="563" width="1" height="1"/><rect x="520" y="563" width="3" height="1"/><rect x="524" y="563" width="1" height="1"/><rect x="518" y="576" width="1" height="1"/><rect x="520" y="576" width="3" height="1"/><rect x="524" y="576" width="1" height="1"/><rect x="518" y="589" width="1" height="1"/><rect x="520" y="589" width="3" height="1"/><rect x="524" y="589" width="1" height="1"/><rect x="518" y="602" width="1" height="1"/><rect x="520" y="602" width="3" height="1"/><rect x="524" y="602" width="1" height="1"/><rect x="518" y="615" width="1" height="1"/><rect x="520" y="615" width="3" height="1"/><rect x="524" y="615" width="1" height="1"/><rect x="518" y="628" width="1" height="1"/><rect x="520" y="628" width="3" height="1"/><rect x="524" y="628" width="1" height="1"/><rect x="518" y="641" width="1" height="1"/><rect x="520" y="641" width="3" height="1"/><rect x="524" y="641" width="1" height="1"/><rect x="518" y="654" width="1" height="1"/><rect x="520" y="654" width="3" height="1"/><rect x="524" y="654" width="1" height="1"/><rect x="41" y="339" width="1" height="1"/><rect x="41" y="341" width="1" height="3"/><rect x="41" y="345" width="1" height="1"/><rect x="61" y="339" width="1" height="1"/><rect x="61" y="341" width="1" height="3"/><rect x="61" y="345" width="1" height="1"/><rect x="81" y="339" width="1" height="1"/><rect x="81" y="341" width="1" height="3"/><rect x="81" y="345" width="1" height="1"/><rect x="101" y="339" width="1" height="1"/><rect x="101" y="341" width="1" height="3"/><rect x="101" y="345" width="1" height="1"/><rect x="121" y="339" width="1" height="1"/><rect x="121" y="341" width="1" height="3"/><rect x="121" y="345" width="1" height="1"/><rect x="141" y="339" width="1" height="1"/><rect x="141" y="341" width="1" height="3"/><rect x="141" y="345" width="1" height="1"/><rect x="161" y="339" width="1" height="1"/><rect x="161" y="341" width="1" height="3"/><rect x="161" y="345" width="1" height="1"/><rect x="181" y="339" width="1" height="1"/><rect x="181" y="341" width="1" height="3"/><rect x="181" y="345" width="1" height="1"/><rect x="201" y="339" width="1" height="1"/><rect x="201" y="341" width="1" height="3"/><rect x="201" y="345" width="1" height="1"/><rect x="221" y="339" width="1" height="1"/><rect x="221" y="341" width="1" height="3"/><rect x="221" y="345" width="1" height="1"/><rect x="241" y="339" width="1" height="1"/><rect x="241" y="341" width="1" height="3"/><rect x="241" y="345" width="1" height="1"/><rect x="261" y="339" width="1" height="1"/><rect x="261" y="341" width="1" height="3"/><rect x="261" y="345" width="1" height="1"/><rect x="281" y="339" width="1" height="1"/><rect x="281" y="341" width="1" height="3"/><rect x="281" y="345" width="1" height="1"/><rect x="301" y="339" width="1" height="1"/><rect x="301" y="341" width="1" height="3"/><rect x="301" y="345" width="1" height="1"/><rect x="321" y="339" width="1" height="1"/><rect x="321" y="341" width="1" height="3"/><rect x="321" y="345" width="1" height="1"/><rect x="341" y="339" width="1" height="1"/><rect x="341" y="341" width="1" height="3"/><rect x="341" y="345" width="1" height="1"/><rect x="361" y="339" width="1" height="1"/><rect x="361" y="341" width="1" height="3"/><rect x="361" y="345" width="1" height="1"/><rect x="381" y="339" width="1" height="1"/><rect x="381" y="341" width="1" height="3"/><rect x="381" y="345" width="1" height="1"/><rect x="401" y="339" width="1" height="1"/><rect x="401" y="341" width="1" height="3"/><rect x="401" y="345" width="1" height="1"/><rect x="421" y="339" width="1" height="1"/><rect x="421" y="341" width="1" height="3"/><rect x="421" y="345" width="1" height="1"/><rect x="441" y="339" width="1" height="1"/><rect x="441" y="341" width="1" height="3"/><rect x="441" y="345" width="1" height="1"/><rect x="461" y="339" width="1" height="1"/><rect x="461" y="341" width="1" height="3"/><rect x="461" y="345" width="1" height="1"/><rect x="481" y="339" width="1" height="1"/><rect x="481" y="341" width="1" height="3"/><rect x="481" y="345" width="1" height="1"/><rect x="501" y="339" width="1" height="1"/><rect x="501" y="341" width="1" height="3"/><rect x="501" y="345" width="1" height="1"/><rect x="541" y="339" width="1" height="1"/><rect x="541" y="341" width="1" height="3"/><rect x="541" y="345" width="1" height="1"/><rect x="561" y="339" width="1" height="1"/><rect x="561" y="341" width="1" height="3"/><rect x="561" y="345" width="1" height="1"/><rect x="581" y="339" width="1" height="1"/><rect x="581" y="341" width="1" height="3"/><rect x="581" y="345" width="1" height="1"/><rect x="601" y="339" width="1" height="1"/><rect x="601" y="341" width="1" height="3"/><rect x="601" y="345" width="1" height="1"/><rect x="621" y="339" width="1" height="1"/><rect x="621" y="341" width="1" height="3"/><rect x="621" y="345" width="1" height="1"/><rect x="641" y="339" width="1" height="1"/><rect x="641" y="341" width="1" height="3"/><rect x="641" y="345" width="1" height="1"/><rect x="661" y="339" width="1" height="1"/><rect x="661" y="341" width="1" height="3"/><rect x="661" y="345" width="1" height="1"/><rect x="681" y="339" width="1" height="1"/><rect x="681" y="341" width="1" height="3"/><rect x="681" y="345" width="1" height="1"/><rect x="701" y="339" width="1" height="1"/><rect x="701" y="341" width="1" height="3"/><rect x="701" y="345" width="1" height="1"/><rect x="721" y="339" width="1" height="1"/><rect x="721" y="341" width="1" height="3"/><rect x="721" y="345" width="1" height="1"/><rect x="741" y="339" width="1" height="1"/><rect x="741" y="341" width="1" height="3"/><rect x="741" y="345" width="1" height="1"/><rect x="761" y="339" width="1" height="1"/><rect x="761" y="341" width="1" height="3"/><rect x="761" y="345" width="1" height="1"/><rect x="781" y="339" width="1" height="1"/><rect x="781" y="341" width="1" height="3"/><rect x="781" y="345" width="1" height="1"/><rect x="801" y="339" width="1" height="1"/><rect x="801" y="341" width="1" height="3"/><rect x="801" y="345" width="1" height="1"/><rect x="821" y="339" width="1" height="1"/><rect x="821" y="341" width="1" height="3"/><rect x="821" y="345" width="1" height="1"/><rect x="841" y="339" width="1" height="1"/><rect x="841" y="341" width="1" height="3"/><rect x="841" y="345" width="1" height="1"/><rect x="861" y="339" width="1" height="1"/><rect x="861" y="341" width="1" height="3"/><rect x="861" y="345" width="1" height="1"/><rect x="881" y="339" width="1" height="1"/><rect x="881" y="341" width="1" height="3"/><rect x="881" y="345" width="1" height="1"/><rect x="901" y="339" width="1" height="1"/><rect x="901" y="341" width="1" height="3"/><rect x="901" y="345" width="1" height="1"/><rect x="921" y="339" width="1" height="1"/><rect x="921" y="341" width="1" height="3"/><rect x="921" y="345" width="1" height="1"/><rect x="941" y="339" width="1" height="1"/><rect x="941" y="341" width="1" height="3"/><rect x="941" y="345" width="1" height="1"/><rect x="961" y="339" width="1" height="1"/><rect x="961" y="341" width="1" height="3"/><rect x="961" y="345" width="1" height="1"/><rect x="981" y="339" width="1" height="1"/><rect x="981" y="341" width="1" height="3"/><rect x="981" y="345" width="1" height="1"/><rect x="1001" y="339" width="1" height="1"/><rect x="1001" y="341" width="1" height="3"/><rect x="1001" y="345" width="1" height="1"/><rect x="41" y="17" width="1" height="1"/><rect x="41" y="19" width="1" height="1"/><rect x="41" y="667" width="1" height="1"/><rect x="41" y="665" width="1" height="1"/><rect x="61" y="17" width="1" height="1"/><rect x="61" y="19" width="1" height="1"/><rect x="61" y="667" width="1" height="1"/><rect x="61" y="665" width="1" height="1"/><rect x="81" y="17" width="1" height="1"/><rect x="81" y="19" width="1" height="1"/><rect x="81" y="667" width="1" height="1"/><rect x="81" y="665" width="1" height="1"/><rect x="101" y="17" width="1" height="1"/><rect x="101" y="19" width="1" height="1"/><rect x="101" y="667" width="1" height="1"/><rect x="101" y="665" width="1" height="1"/><rect x="121" y="18" width="1" height="1"/><rect x="121" y="20" width="1" height="1"/><rect x="121" y="22" width="1" height="1"/><rect x="121" y="666" width="1" height="1"/><rect x="121" y="664" width="1" height="1"/><rect x="121" y="662" width="1" height="1"/><rect x="141" y="17" width="1" height="1"/><rect x="141" y="19" width="1" height="1"/><rect x="141" y="667" width="1" height="1"/><rect x="141" y="665" width="1" height="1"/><rect x="161" y="17" width="1" height="1"/><rect x="161" y="19" width="1" height="1"/><rect x="161" y="667" width="1" height="1"/><rect x="161" y="665" width="1" height="1"/><rect x="181" y="17" width="1" height="1"/><rect x="181" y="19" width="1" height="1"/><rect x="181" y="667" width="1" height="1"/><rect x="181" y="665" width="1" height="1"/><rect x="201" y="17" width="1" height="1"/><rect x="201" y="19" width="1" height="1"/><rect x="201" y="667" width="1" height="1"/><rect x="201" y="665" width="1" height="1"/><rect x="221" y="18" width="1" height="1"/><rect x="221" y="20" width="1" height="1"/><rect x="221" y="22" width="1" height="1"/><rect x="221" y="666" width="1" height="1"/><rect x="221" y="664" width="1" height="1"/><rect x="221" y="662" width="1" height="1"/><rect x="241" y="17" width="1" height="1"/><rect x="241" y="19" width="1" height="1"/><rect x="241" y="667" width="1" height="1"/><rect x="241" y="665" width="1" height="1"/><rect x="261" y="17" width="1" height="1"/><rect x="261" y="19" width="1" height="1"/><rect x="261" y="667" width="1" height="1"/><rect x="261" y="665" width="1" height="1"/><rect x="281" y="17" width="1" height="1"/><rect x="281" y="19" width="1" height="1"/><rect x="281" y="667" width="1" height="1"/><rect x="281" y="665" width="1" height="1"/><rect x="301" y="17" width="1" height="1"/><rect x="301" y="19" width="1" height="1"/><rect x="301" y="667" width="1" height="1"/><rect x="301" y="665" width="1" height="1"/><rect x="321" y="18" width="1" height="1"/><rect x="321" y="20" width="1" height="1"/><rect x="321" y="22" width="1" height="1"/><rect x="321" y="666" width="1" height="1"/><rect x="321" y="664" width="1" height="1"/><rect x="321" y="662" width="1" height="1"/><rect x="341" y="17" width="1" height="1"/><rect x="341" y="19" width="1" height="1"/><rect x="341" y="667" width="1" height="1"/><rect x="341" y="665" width="1" height="1"/><rect x="361" y="17" width="1" height="1"/><rect x="361" y="19" width="1" height="1"/><rect x="361" y="667" width="1" height="1"/><rect x="361" y="665" width="1" height="1"/><rect x="381" y="17" width="1" height="1"/><rect x="381" y="19" width="1" height="1"/><rect x="381" y="667" width="1" height="1"/><rect x="381" y="665" width="1" height="1"/><rect x="401" y="17" width="1" height="1"/><rect x="401" y="19" width="1" height="1"/><rect x="401" y="667" width="1" height="1"/><rect x="401" y="665" width="1" height="1"/><rect x="421" y="18" width="1" height="1"/><rect x="421" y="20" width="1" height="1"/><rect x="421" y="22" width="1" height="1"/><rect x="421" y="666" width="1" height="1"/><rect x="421" y="664" width="1" height="1"/><rect x="421" y="662" width="1" height="1"/><rect x="441" y="17" width="1" height="1"/><rect x="441" y="19" width="1" height="1"/><rect x="441" y="667" width="1" height="1"/><rect x="441" y="665" width="1" height="1"/><rect x="461" y="17" width="1" height="1"/><rect x="461" y="19" width="1" height="1"/><rect x="461" y="667" width="1" height="1"/><rect x="461" y="665" width="1" height="1"/><rect x="481" y="17" width="1" height="1"/><rect x="481" y="19" width="1" height="1"/><rect x="481" y="667" width="1" height="1"/><rect x="481" y="665" width="1" height="1"/><rect x="501" y="17" width="1" height="1"/><rect x="501" y="19" width="1" height="1"/><rect x="501" y="667" width="1" height="1"/><rect x="501" y="665" width="1" height="1"/><rect x="521" y="18" width="1" height="1"/><rect x="521" y="20" width="1" height="1"/><rect x="521" y="22" width="1" height="1"/><rect x="521" y="666" width="1" height="1"/><rect x="521" y="664" width="1" height="1"/><rect x="521" y="662" width="1" height="1"/><rect x="541" y="17" width="1" height="1"/><rect x="541" y="19" width="1" height="1"/><rect x="541" y="667" width="1" height="1"/><rect x="541" y="665" width="1" height="1"/><rect x="561" y="17" width="1" height="1"/><rect x="561" y="19" width="1" height="1"/><rect x="561" y="667" width="1" height="1"/><rect x="561" y="665" width="1" height="1"/><rect x="581" y="17" width="1" height="1"/><rect x="581" y="19" width="1" height="1"/><rect x="581" y="667" width="1" height="1"/><rect x="581" y="665" width="1" height="1"/><rect x="601" y="17" width="1" height="1"/><rect x="601" y="19" width="1" height="1"/><rect x="601" y="667" width="1" height="1"/><rect x="601" y="665" width="1" height="1"/><rect x="621" y="18" width="1" height="1"/><rect x="621" y="20" width="1" height="1"/><rect x="621" y="22" width="1" height="1"/><rect x="621" y="666" width="1" height="1"/><rect x="621" y="664" width="1" height="1"/><rect x="621" y="662" width="1" height="1"/><rect x="641" y="17" width="1" height="1"/><rect x="641" y="19" width="1" height="1"/><rect x="641" y="667" width="1" height="1"/><rect x="641" y="665" width="1" height="1"/><rect x="661" y="17" width="1" height="1"/><rect x="661" y="19" width="1" height="1"/><rect x="661" y="667" width="1" height="1"/><rect x="661" y="665" width="1" height="1"/><rect x="681" y="17" width="1" height="1"/><rect x="681" y="19" width="1" height="1"/><rect x="681" y="667" width="1" height="1"/><rect x="681" y="665" width="1" height="1"/><rect x="701" y="17" width="1" height="1"/><rect x="701" y="19" width="1" height="1"/><rect x="701" y="667" width="1" height="1"/><rect x="701" y="665" width="1" height="1"/><rect x="721" y="18" width="1" height="1"/><rect x="721" y="20" width="1" height="1"/><rect x="721" y="22" width="1" height="1"/><rect x="721" y="666" width="1" height="1"/><rect x="721" y="664" width="1" height="1"/><rect x="721" y="662" width="1" height="1"/><rect x="741" y="17" width="1" height="1"/><rect x="741" y="19" width="1" height="1"/><rect x="741" y="667" width="1" height="1"/><rect x="741" y="665" width="1" height="1"/><rect x="761" y="17" width="1" height="1"/><rect x="761" y="19" width="1" height="1"/><rect x="761" y="667" width="1" height="1"/><rect x="761" y="665" width="1" height="1"/><rect x="781" y="17" width="1" height="1"/><rect x="781" y="19" width="1" height="1"/><rect x="781" y="667" width="1" height="1"/><rect x="781" y="665" width="1" height="1"/><rect x="801" y="17" width="1" height="1"/><rect x="801" y="19" width="1" height="1"/><rect x="801" y="667" width="1" height="1"/><rect x="801" y="665" width="1" height="1"/><rect x="821" y="18" width="1" height="1"/><rect x="821" y="20" width="1" height="1"/><rect x="821" y="22" width="1" height="1"/><rect x="821" y="666" width="1" height="1"/><rect x="821" y="664" width="1" height="1"/><rect x="821" y="662" width="1" height="1"/><rect x="841" y="17" width="1" height="1"/><rect x="841" y="19" width="1" height="1"/><rect x="841" y="667" width="1" height="1"/><rect x="841" y="665" width="1" height="1"/><rect x="861" y="17" width="1" height="1"/><rect x="861" y="19" width="1" height="1"/><rect x="861" y="667" width="1" height="1"/><rect x="861" y="665" width="1" height="1"/><rect x="881" y="17" width="1" height="1"/><rect x="881" y="19" width="1" height="1"/><rect x="881" y="667" width="1" height="1"/><rect x="881" y="665" width="1" height="1"/><rect x="901" y="17" width="1" height="1"/><rect x="901" y="19" width="1" height="1"/><rect x="901" y="667" width="1" height="1"/><rect x="901" y="665" width="1" height="1"/><rect x="921" y="18" width="1" height="1"/><rect x="921" y="20" width="1" height="1"/><rect x="921" y="22" width="1" height="1"/><rect x="921" y="666" width="1" height="1"/><rect x="921" y="664" width="1" height="1"/><rect x="921" y="662" width="1" height="1"/><rect x="941" y="17" width="1" height="1"/><rect x="941" y="19" width="1" height="1"/><rect x="941" y="667" width="1" height="1"/><rect x="941" y="665" width="1" height="1"/><rect x="961" y="17" width="1" height="1"/><rect x="961" y="19" width="1" height="1"/><rect x="961" y="667" width="1" height="1"/><rect x="961" y="665" width="1" height="1"/><rect x="981" y="17" width="1" height="1"/><rect x="981" y="19" width="1" height="1"/><rect x="981" y="667" width="1" height="1"/><rect x="981" y="665" width="1" height="1"/><rect x="1001" y="17" width="1" height="1"/><rect x="1001" y="19" width="1" height="1"/><rect x="1001" y="667" width="1" height="1"/><rect x="1001" y="665" width="1" height="1"/><rect x="21" y="30" width="1" height="1"/><rect x="23" y="30" width="1" height="1"/><rect x="1018" y="30" width="1" height="1"/><rect x="1020" y="30" width="1" height="1"/><rect x="21" y="43" width="1" height="1"/><rect x="23" y="43" width="1" height="1"/><rect x="1018" y="43" width="1" height="1"/><rect x="1020" y="43" width="1" height="1"/><rect x="21" y="56" width="1" height="1"/><rect x="23" y="56" width="1" height="1"/><rect x="1018" y="56" width="1" height="1"/><rect x="1020" y="56" width="1" height="1"/><rect x="21" y="69" width="1" height="1"/><rect x="23" y="69" width="1" height="1"/><rect x="1018" y="69" width="1" height="1"/><rect x="1020" y="69" width="1" height="1"/><rect x="21" y="82" width="1" height="1"/><rect x="23" y="82" width="1" height="1"/><rect x="1018" y="82" width="1" height="1"/><rect x="1020" y="82" width="1" height="1"/><rect x="25" y="82" width="1" height="1"/><rect x="1016" y="82" width="1" height="1"/><rect x="21" y="95" width="1" height="1"/><rect x="23" y="95" width="1" height="1"/><rect x="1018" y="95" width="1" height="1"/><rect x="1020" y="95" width="1" height="1"/><rect x="21" y="108" width="1" height="1"/><rect x="23" y="108" width="1" height="1"/><rect x="1018" y="108" width="1" height="1"/><rect x="1020" y="108" width="1" height="1"/><rect x="21" y="121" width="1" height="1"/><rect x="23" y="121" width="1" height="1"/><rect x="1018" y="121" width="1" height="1"/><rect x="1020" y="121" width="1" height="1"/><rect x="21" y="134" width="1" height="1"/><rect x="23" y="134" width="1" height="1"/><rect x="1018" y="134" width="1" height="1"/><rect x="1020" y="134" width="1" height="1"/><rect x="21" y="147" width="1" height="1"/><rect x="23" y="147" width="1" height="1"/><rect x="1018" y="147" width="1" height="1"/><rect x="1020" y="147" width="1" height="1"/><rect x="25" y="147" width="1" height="1"/><rect x="1016" y="147" width="1" height="1"/><rect x="21" y="160" width="1" height="1"/><rect x="23" y="160" width="1" height="1"/><rect x="1018" y="160" width="1" height="1"/><rect x="1020" y="160" width="1" height="1"/><rect x="21" y="173" width="1" height="1"/><rect x="23" y="173" width="1" height="1"/><rect x="1018" y="173" width="1" height="1"/><rect x="1020" y="173" width="1" height="1"/><rect x="21" y="186" width="1" height="1"/><rect x="23" y="186" width="1" height="1"/><rect x="1018" y="186" width="1" height="1"/><rect x="1020" y="186" width="1" height="1"/><rect x="21" y="199" width="1" height="1"/><rect x="23" y="199" width="1" height="1"/><rect x="1018" y="199" width="1" height="1"/><rect x="1020" y="199" width="1" height="1"/><rect x="21" y="212" width="1" height="1"/><rect x="23" y="212" width="1" height="1"/><rect x="1018" y="212" width="1" height="1"/><rect x="1020" y="212" width="1" height="1"/><rect x="25" y="212" width="1" height="1"/><rect x="1016" y="212" width="1" height="1"/><rect x="21" y="225" width="1" height="1"/><rect x="23" y="225" width="1" height="1"/><rect x="1018" y="225" width="1" height="1"/><rect x="1020" y="225" width="1" height="1"/><rect x="21" y="238" width="1" height="1"/><rect x="23" y="238" width="1" height="1"/><rect x="1018" y="238" width="1" height="1"/><rect x="1020" y="238" width="1" height="1"/><rect x="21" y="251" width="1" height="1"/><rect x="23" y="251" width="1" height="1"/><rect x="1018" y="251" width="1" height="1"/><rect x="1020" y="251" width="1" height="1"/><rect x="21" y="264" width="1" height="1"/><rect x="23" y="264" width="1" height="1"/><rect x="1018" y="264" width="1" height="1"/><rect x="1020" y="264" width="1" height="1"/><rect x="21" y="277" width="1" height="1"/><rect x="23" y="277" width="1" height="1"/><rect x="1018" y="277" width="1" height="1"/><rect x="1020" y="277" width="1" height="1"/><rect x="25" y="277" width="1" height="1"/><rect x="1016" y="277" width="1" height="1"/><rect x="21" y="290" width="1" height="1"/><rect x="23" y="290" width="1" height="1"/><rect x="1018" y="290" width="1" height="1"/><rect x="1020" y="290" width="1" height="1"/><rect x="21" y="303" width="1" height="1"/><rect x="23" y="303" width="1" height="1"/><rect x="1018" y="303" width="1" height="1"/><rect x="1020" y="303" width="1" height="1"/><rect x="21" y="316" width="1" height="1"/><rect x="23" y="316" width="1" height="1"/><rect x="1018" y="316" width="1" height="1"/><rect x="1020" y="316" width="1" height="1"/><rect x="21" y="329" width="1" height="1"/><rect x="23" y="329" width="1" height="1"/><rect x="1018" y="329" width="1" height="1"/><rect x="1020" y="329" width="1" height="1"/><rect x="21" y="342" width="1" height="1"/><rect x="23" y="342" width="1" height="1"/><rect x="1018" y="342" width="1" height="1"/><rect x="1020" y="342" width="1" height="1"/><rect x="25" y="342" width="1" height="1"/><rect x="1016" y="342" width="1" height="1"/><rect x="21" y="355" width="1" height="1"/><rect x="23" y="355" width="1" height="1"/><rect x="1018" y="355" width="1" height="1"/><rect x="1020" y="355" width="1" height="1"/><rect x="21" y="368" width="1" height="1"/><rect x="23" y="368" width="1" height="1"/><rect x="1018" y="368" width="1" height="1"/><rect x="1020" y="368" width="1" height="1"/><rect x="21" y="381" width="1" height="1"/><rect x="23" y="381" width="1" height="1"/><rect x="1018" y="381" width="1" height="1"/><rect x="1020" y="381" width="1" height="1"/><rect x="21" y="394" width="1" height="1"/><rect x="23" y="394" width="1" height="1"/><rect x="1018" y="394" width="1" height="1"/><rect x="1020" y="394" width="1" height="1"/><rect x="21" y="407" width="1" height="1"/><rect x="23" y="407" width="1" height="1"/><rect x="1018" y="407" width="1" height="1"/><rect x="1020" y="407" width="1" height="1"/><rect x="25" y="407" width="1" height="1"/><rect x="1016" y="407" width="1" height="1"/><rect x="21" y="420" width="1" height="1"/><rect x="23" y="420" width="1" height="1"/><rect x="1018" y="420" width="1" height="1"/><rect x="1020" y="420" width="1" height="1"/><rect x="21" y="433" width="1" height="1"/><rect x="23" y="433" width="1" height="1"/><rect x="1018" y="433" width="1" height="1"/><rect x="1020" y="433" width="1" height="1"/><rect x="21" y="446" width="1" height="1"/><rect x="23" y="446" width="1" height="1"/><rect x="1018" y="446" width="1" height="1"/><rect x="1020" y="446" width="1" height="1"/><rect x="21" y="459" width="1" height="1"/><rect x="23" y="459" width="1" height="1"/><rect x="1018" y="459" width="1" height="1"/><rect x="1020" y="459" width="1" height="1"/><rect x="21" y="472" width="1" height="1"/><rect x="23" y="472" width="1" height="1"/><rect x="1018" y="472" width="1" height="1"/><rect x="1020" y="472" width="1" height="1"/><rect x="25" y="472" width="1" height="1"/><rect x="1016" y="472" width="1" height="1"/><rect x="21" y="485" width="1" height="1"/><rect x="23" y="485" width="1" height="1"/><rect x="1018" y="485" width="1" height="1"/><rect x="1020" y="485" width="1" height="1"/><rect x="21" y="498" width="1" height="1"/><rect x="23" y="498" width="1" height="1"/><rect x="1018" y="498" width="1" height="1"/><rect x="1020" y="498" width="1" height="1"/><rect x="21" y="511" width="1" height="1"/><rect x="23" y="511" width="1" height="1"/><rect x="1018" y="511" width="1" height="1"/><rect x="1020" y="511" width="1" height="1"/><rect x="21" y="524" width="1" height="1"/><rect x="23" y="524" width="1" height="1"/><rect x="1018" y="524" width="1" height="1"/><rect x="1020" y="524" width="1" height="1"/><rect x="21" y="537" width="1" height="1"/><rect x="23" y="537" width="1" height="1"/><rect x="1018" y="537" width="1" height="1"/><rect x="1020" y="537" width="1" height="1"/><rect x="25" y="537" width="1" height="1"/><rect x="1016" y="537" width="1" height="1"/><rect x="21" y="550" width="1" height="1"/><rect x="23" y="550" width="1" height="1"/><rect x="1018" y="550" width="1" height="1"/><rect x="1020" y="550" width="1" height="1"/><rect x="21" y="563" width="1" height="1"/><rect x="23" y="563" width="1" height="1"/><rect x="1018" y="563" width="1" height="1"/><rect x="1020" y="563" width="1" height="1"/><rect x="21" y="576" width="1" height="1"/><rect x="23" y="576" width="1" height="1"/><rect x="1018" y="576" width="1" height="1"/><rect x="1020" y="576" width="1" height="1"/><rect x="21" y="589" width="1" height="1"/><rect x="23" y="589" width="1" height="1"/><rect x="1018" y="589" width="1" height="1"/><rect x="1020" y="589" width="1" height="1"/><rect x="21" y="602" width="1" height="1"/><rect x="23" y="602" width="1" height="1"/><rect x="1018" y="602" width="1" height="1"/><rect x="1020" y="602" width="1" height="1"/><rect x="25" y="602" width="1" height="1"/><rect x="1016" y="602" width="1" height="1"/><rect x="21" y="615" width="1" height="1"/><rect x="23" y="615" width="1" height="1"/><rect x="1018" y="615" width="1" height="1"/><rect x="1020" y="615" width="1" height="1"/><rect x="21" y="628" width="1" height="1"/><rect x="23" y="628" width="1" height="1"/><rect x="1018" y="628" width="1" height="1"/><rect x="1020" y="628" width="1" height="1"/><rect x="21" y="641" width="1" height="1"/><rect x="23" y="641" width="1" height="1"/><rect x="1018" y="641" width="1" height="1"/><rect x="1020" y="641" width="1" height="1"/><rect x="21" y="654" width="1" height="1"/><rect x="23" y="654" width="1" height="1"/><rect x="1018" y="654" width="1" height="1"/><rect x="1020" y="654" width="1" height="1"/></g>
<g fill="#5590cc"><rect x="20" y="16" width="1002" height="1"/><rect x="20" y="16" width="1" height="653"/><rect x="1021" y="16" width="1" height="653"/><rect x="20" y="668" width="1002" height="1"/><rect x="121" y="0" width="800" height="1"/><rect x="121" y="15" width="800" height="1"/><rect x="121" y="0" width="1" height="16"/><rect x="920" y="0" width="1" height="16"/></g>
<rect x="282" y="7" width="480" height="1" fill="#00e0e0"/>
<rect x="519" y="1" width="5" height="14" fill="#fff"/>
<rect x="521" y="3" width="1" height="10" fill="#000"/><rect x="521" y="3" width="1" height="2" fill="#ff9c00"/>
<rect x="518" y="1" width="1" height="1" fill="#ff9c00"/><rect x="524" y="1" width="1" height="1" fill="#ff9c00"/>
<path d="M516 17H527.5L521.7 23Z" fill="#ff9c00"/>
<path d="M122 10.5L127 5H133L134 6V15L133 16H127Z" fill="#ff9c00" shape-rendering="auto"/><rect x="127.5" y="6.5" width="5.5" height="1.8" fill="#000"/><rect x="129.4" y="6.5" width="1.8" height="8.5" fill="#000"/>
<path d="M21.5 30.5L27 24H37L38 25V36L37 37H27Z" fill="#ff9c00" shape-rendering="auto"/><rect x="28" y="26" width="8.6" height="2" fill="#000"/><rect x="31" y="26" width="2.4" height="10" fill="#000"/>
<path d="M0.7 71.5H12.5L20 79.5L12.5 87.5H0.7Z" fill="#000" stroke="#ff40ff" stroke-width="1.5" shape-rendering="auto"/><text x="7.8" y="84.3" font-family="DejaVu Sans, Liberation Sans, sans-serif" font-size="13" font-weight="normal" text-anchor="middle" fill="#ff30ff" stroke="#ff30ff" stroke-width="0.25" shape-rendering="auto">3</text>
<path d="M0.7 178.5H12.5L20 186.5L12.5 194.5H0.7Z" fill="#00e6e6" stroke="#00e6e6" stroke-width="1.5" shape-rendering="auto"/><text x="7.8" y="191.3" font-family="DejaVu Sans, Liberation Sans, sans-serif" font-size="13" font-weight="bold" text-anchor="middle" fill="#000" stroke="#000" stroke-width="0" shape-rendering="auto">2</text>
<path d="M0.7 658.5H12.5L20 666.5L12.5 674.5H0.7Z" fill="#000" stroke="#20e020" stroke-width="1.5" shape-rendering="auto"/><text x="7.8" y="671.3" font-family="DejaVu Sans, Liberation Sans, sans-serif" font-size="13" font-weight="normal" text-anchor="middle" fill="#20e020" stroke="#20e020" stroke-width="0.25" shape-rendering="auto">4</text></svg>
<div class="abs tek">Tek</div>
<div class="abs" style="left:35px;top:-0.5px;font-size:14px;letter-spacing:1.9px">Run</div>
<div class="abs" style="left:926px;top:-0.2px;font-size:14px;letter-spacing:1.4px">Trig?</div>

<!-- channel readout box -->
<div class="box" style="left:20px;top:670px;width:556px;height:22px;"></div>
<div class="pill" style="left:165px;background:#00e0e8;">2</div>
<div class="abs c2" style="left:207px;top:672px;">200mV</div>
<div class="abs c2" style="left:269px;top:672px;font-size:14px;-webkit-text-stroke:0;">Ω</div>
<div class="sm c2" style="left:282px;top:674.5px;">B</div><div class="sm c2" style="left:286px;top:679.5px;font-size:8.5px">W</div>
<div class="pill" style="left:305px;background:#b010b0;">3</div>
<div class="abs c3" style="left:346px;top:672px;">200mV</div>
<div class="abs c3" style="left:408px;top:672px;font-size:14px;-webkit-text-stroke:0;">Ω</div>
<div class="sm c3" style="left:421px;top:674.5px;">B</div><div class="sm c3" style="left:425px;top:679.5px;font-size:8.5px">W</div>
<div class="pill" style="left:443px;background:#10a010;">4</div>
<div class="abs c4" style="left:474px;top:672px;">↓100mV</div>
<div class="abs c4" style="left:547px;top:672px;font-size:14px;-webkit-text-stroke:0;">Ω</div>
<div class="sm c4" style="left:560px;top:674.5px;">B</div><div class="sm c4" style="left:564px;top:679.5px;font-size:8.5px">W</div>

<!-- timebase box -->
<div class="box" style="left:582px;top:670px;width:148px;height:38px;"></div>
<div class="abs" style="left:588px;top:672px;letter-spacing:1.5px">2.00µs</div>
<div class="abs or" style="left:624px;top:689px;letter-spacing:0.9px">1.806000ms</div>
<svg class="abs" style="left:586px;top:690px" width="40" height="16" viewBox="0 0 40 16">
 <rect x="1" y="1.5" width="12" height="12" rx="1.5" fill="#ff9c00"/>
 <rect x="3.5" y="3.5" width="7" height="2" fill="#000"/><rect x="6" y="3.5" width="2" height="8.5" fill="#000"/>
 <path d="M13 7.5H21M18.5 4.5L21.5 7.5L18.5 10.5" stroke="#ff9c00" stroke-width="1.4" fill="none"/>
 <path d="M23.5 4.5H35.5L29.5 10.5Z" fill="#ff9c00"/>
</svg>

<!-- sample box -->
<div class="box" style="left:737px;top:670px;width:107px;height:38px;"></div>
<div class="abs" style="left:743px;top:672px;">2.50GS/s</div>
<div class="abs" style="left:743px;top:689px;letter-spacing:1.5px">5M points</div>

<!-- trigger box -->
<div class="box" style="left:851px;top:670px;width:171px;height:39px;"></div>
<div class="pill" style="left:882px;background:#ffee00;">1</div>
<svg class="abs" style="left:918px;top:672px" width="18" height="16" viewBox="0 0 18 16">
 <path d="M2.5 13H7L10 4.5H14.5" stroke="#f4f4f4" stroke-width="1.7" fill="none"/>
</svg>
<div class="abs" style="left:965px;top:672px;">2.10 V</div>

<!-- buttons -->
<div class="btn" style="left:20px;"><span style="top:9px">Save</span><span style="top:26px">Screen Image</span></div>
<div class="btn" style="left:138px;"><span style="top:9px">Save</span><span style="top:26px">Waveform</span></div>
<div class="btn" style="left:256px;"><span style="top:9px">Save</span><span style="top:26px">Setup</span></div>
<div class="btn" style="left:374px;"><span style="top:9px">Recall</span><span style="top:26px">Waveform</span></div>
<div class="btn" style="left:492px;"><span style="top:9px">Recall</span><span style="top:26px">Setup</span></div>
<div class="btn" style="left:610px;"><span style="top:1px;letter-spacing:1.3px">Assign</span>
 <span style="top:18px;left:70px;right:auto;">to</span>
 <b style="position:absolute;left:29px;top:19px;width:34px;height:14px;border-radius:6px;background:linear-gradient(135deg,#fff 60%,#bbb);color:#000;-webkit-text-stroke:0;font-family:'Liberation Sans',sans-serif;font-size:11px;line-height:14px;letter-spacing:0;text-align:center;box-shadow:1px 1px 0 #888;">Save</b>
 <span style="top:35px;left:30px;right:auto;width:53px;height:16px;background:#0a6cff;color:#fff;">Image</span>
</div>
<div class="btn" style="left:728px;"><span style="top:9px">File</span><span style="top:26px">Utilities</span></div>

<!-- date -->
<div class="box" style="left:908px;top:729px;width:114px;height:37px;"></div>
<div class="abs" style="left:915px;top:732px;word-spacing:1px;letter-spacing:0.95px">10 Nov 2023</div>
<div class="abs" style="left:915px;top:748px;">14:23:32</div>
</body>
</html>
